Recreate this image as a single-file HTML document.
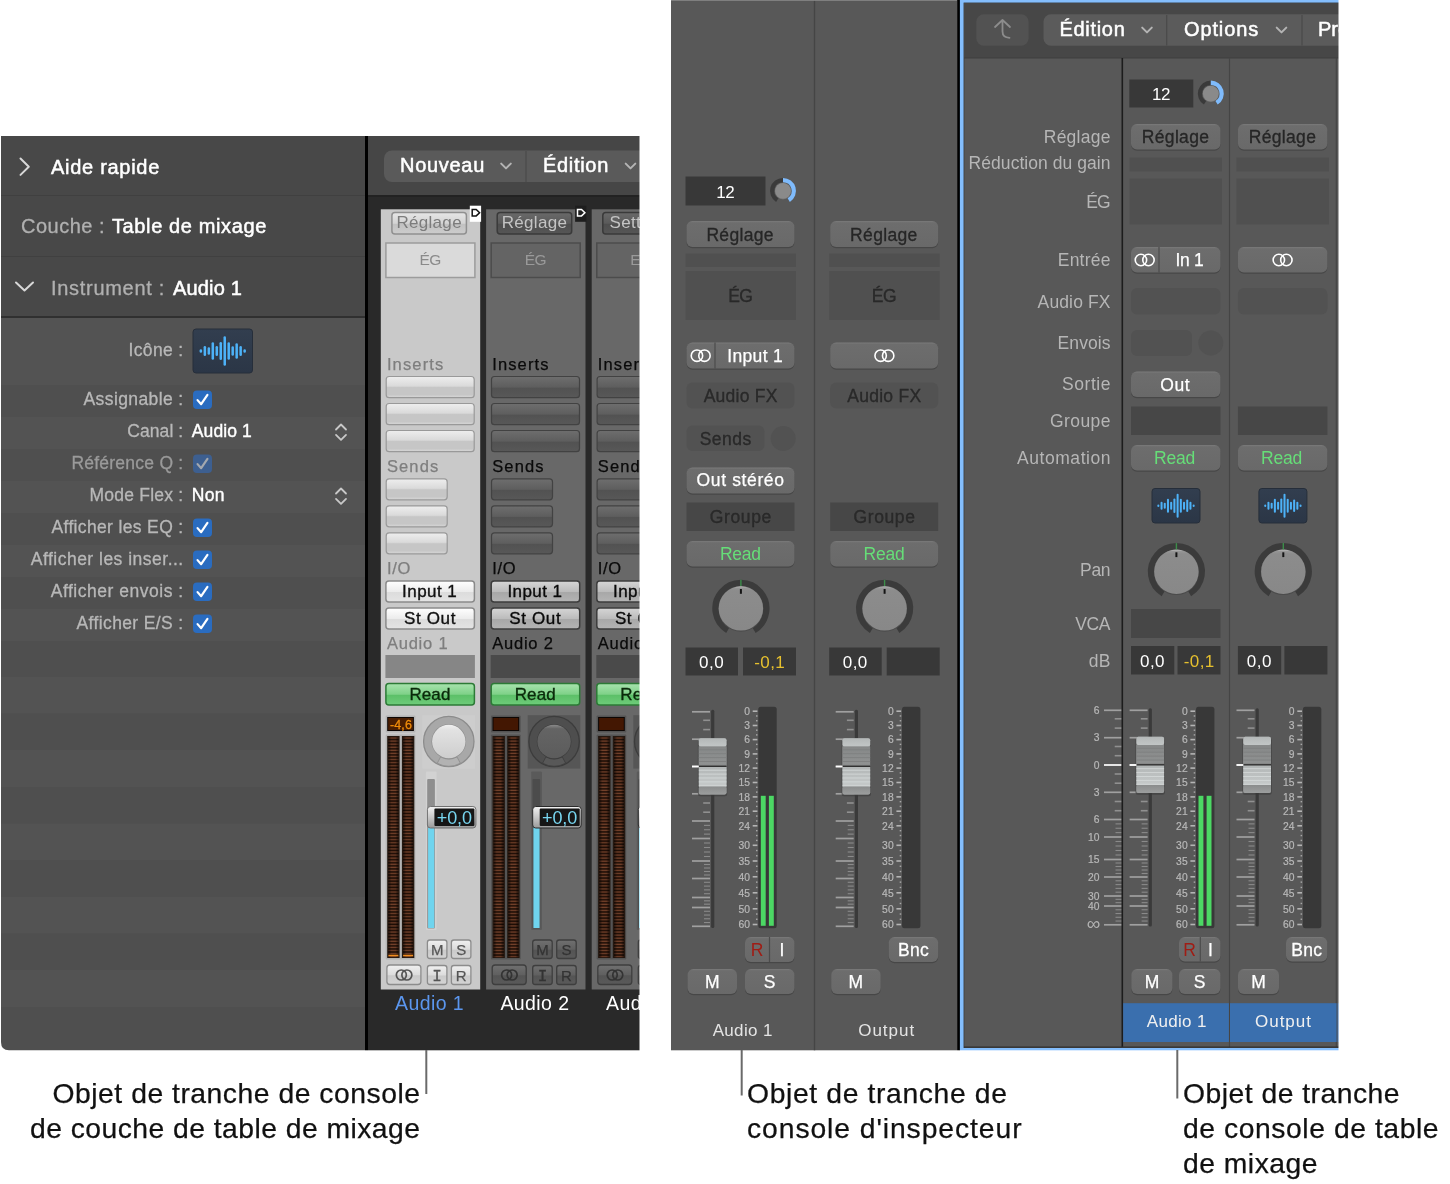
<!DOCTYPE html>
<html lang="fr"><head><meta charset="utf-8"><title>Objets de tranche de console</title>
<style>html,body{margin:0;padding:0;background:#ffffff;}body{width:1450px;height:1184px;overflow:hidden;}svg{display:block;will-change:transform;font-family:"Liberation Sans",sans-serif;}</style></head><body>
<svg width="1450" height="1184" viewBox="0 0 1450 1184">
<defs>
<clipPath id="envclip"><rect x="365" y="136" width="274.5" height="914"/></clipPath>
<clipPath id="mixclip"><rect x="957" y="0" width="381" height="1050"/></clipPath>
<linearGradient id="icong" x1="0" y1="0" x2="0" y2="1"><stop offset="0" stop-color="#323e4f"/><stop offset="1" stop-color="#2b3646"/></linearGradient>
<linearGradient id="slotL" x1="0" y1="0" x2="0" y2="1"><stop offset="0" stop-color="#eeeeee"/><stop offset="0.45" stop-color="#dadada"/><stop offset="0.52" stop-color="#c6c6c6"/><stop offset="0.85" stop-color="#c6c6c6"/><stop offset="1" stop-color="#d8d8d8"/></linearGradient>
<linearGradient id="slotD" x1="0" y1="0" x2="0" y2="1"><stop offset="0" stop-color="#6e6e6e"/><stop offset="0.5" stop-color="#5e5e5e"/><stop offset="0.55" stop-color="#525252"/><stop offset="1" stop-color="#585858"/></linearGradient>
<linearGradient id="btnL" x1="0" y1="0" x2="0" y2="1"><stop offset="0" stop-color="#ffffff"/><stop offset="0.5" stop-color="#ececec"/><stop offset="0.55" stop-color="#dcdcdc"/><stop offset="1" stop-color="#e4e4e4"/></linearGradient>
<linearGradient id="btnD" x1="0" y1="0" x2="0" y2="1"><stop offset="0" stop-color="#d6d6d6"/><stop offset="0.5" stop-color="#bcbcbc"/><stop offset="0.55" stop-color="#a8a8a8"/><stop offset="1" stop-color="#b4b4b4"/></linearGradient>
<linearGradient id="setL" x1="0" y1="0" x2="0" y2="1"><stop offset="0" stop-color="#e6e6e6"/><stop offset="0.5" stop-color="#d4d4d4"/><stop offset="0.55" stop-color="#c2c2c2"/><stop offset="1" stop-color="#cccccc"/></linearGradient>
<linearGradient id="setD" x1="0" y1="0" x2="0" y2="1"><stop offset="0" stop-color="#6a6a6a"/><stop offset="0.5" stop-color="#5a5a5a"/><stop offset="0.55" stop-color="#4e4e4e"/><stop offset="1" stop-color="#565656"/></linearGradient>
<linearGradient id="sqL" x1="0" y1="0" x2="0" y2="1"><stop offset="0" stop-color="#f0f0f0"/><stop offset="0.5" stop-color="#dcdcdc"/><stop offset="0.55" stop-color="#cacaca"/><stop offset="1" stop-color="#d4d4d4"/></linearGradient>
<linearGradient id="sqD" x1="0" y1="0" x2="0" y2="1"><stop offset="0" stop-color="#707070"/><stop offset="0.5" stop-color="#606060"/><stop offset="0.55" stop-color="#545454"/><stop offset="1" stop-color="#5a5a5a"/></linearGradient>
<linearGradient id="readG" x1="0" y1="0" x2="0" y2="1"><stop offset="0" stop-color="#a8e4ae"/><stop offset="0.5" stop-color="#7fd188"/><stop offset="0.55" stop-color="#5cc068"/><stop offset="1" stop-color="#6fcc7a"/></linearGradient>
<linearGradient id="capG" x1="0" y1="0" x2="0" y2="1"><stop offset="0" stop-color="#f2f2f2"/><stop offset="0.5" stop-color="#c8c8c8"/><stop offset="1" stop-color="#9a9a9a"/></linearGradient>
<linearGradient id="knobL" x1="0" y1="0" x2="0" y2="1"><stop offset="0" stop-color="#f0f0f0"/><stop offset="0.15" stop-color="#e2e2e2"/><stop offset="1" stop-color="#cecece"/></linearGradient>
<linearGradient id="knobD" x1="0" y1="0" x2="0" y2="1"><stop offset="0" stop-color="#8a8a8a"/><stop offset="0.12" stop-color="#646464"/><stop offset="1" stop-color="#5c5c5c"/></linearGradient>
<linearGradient id="btnG" x1="0" y1="0" x2="0" y2="1"><stop offset="0" stop-color="#7b7b7b"/><stop offset="0.07" stop-color="#6d6d6d"/><stop offset="1" stop-color="#696969"/></linearGradient>
<linearGradient id="panG" x1="0" y1="0" x2="0" y2="1"><stop offset="0" stop-color="#c4c4c4"/><stop offset="0.04" stop-color="#969696"/><stop offset="0.1" stop-color="#8c8c8c"/><stop offset="1" stop-color="#888888"/></linearGradient>
<linearGradient id="fcTop" x1="0" y1="0" x2="0" y2="1"><stop offset="0" stop-color="#b4b8b8"/><stop offset="1" stop-color="#c2c6c6"/></linearGradient>
<linearGradient id="fcMidT" x1="0" y1="0" x2="0" y2="1"><stop offset="0" stop-color="#868888"/><stop offset="1" stop-color="#909292"/></linearGradient>
<linearGradient id="fcMidB" x1="0" y1="0" x2="0" y2="1"><stop offset="0" stop-color="#b2b6b6"/><stop offset="1" stop-color="#c6caca"/></linearGradient>
<linearGradient id="fcBot" x1="0" y1="0" x2="0" y2="1"><stop offset="0" stop-color="#8a8c8c"/><stop offset="1" stop-color="#9c9e9e"/></linearGradient>
<linearGradient id="faderG" x1="0" y1="0" x2="0" y2="1"><stop offset="0" stop-color="#c4c4c4"/><stop offset="0.08" stop-color="#b4b4b4"/><stop offset="0.48" stop-color="#7c7c7c"/><stop offset="0.5" stop-color="#c8c8c8"/><stop offset="0.9" stop-color="#b0b0b0"/><stop offset="1" stop-color="#8c8c8c"/></linearGradient>
<pattern id="meterP" width="4" height="3.08" patternUnits="userSpaceOnUse" y="737"><rect width="4" height="3.08" fill="#1e0e06"/><rect y="0.35" width="4" height="1.35" fill="#74412a"/></pattern>
<linearGradient id="meterE" x1="0" y1="0" x2="1" y2="0"><stop offset="0" stop-color="#000" stop-opacity="0.55"/><stop offset="0.3" stop-color="#000" stop-opacity="0"/><stop offset="0.7" stop-color="#000" stop-opacity="0"/><stop offset="1" stop-color="#000" stop-opacity="0.55"/></linearGradient>
</defs>
<g id="inspector">
<path d="M1 136 H365 V1050.3 H9 Q1 1050.3 1 1042 Z" fill="#4f4f4f"/>
<rect x="1" y="136" width="364" height="181" fill="#484848"/>
<line x1="1" y1="195.5" x2="365" y2="195.5" stroke="#404040" stroke-width="1" />
<line x1="1" y1="256.5" x2="365" y2="256.5" stroke="#404040" stroke-width="1" />
<line x1="1" y1="317" x2="365" y2="317" stroke="#303030" stroke-width="2" />
<rect x="1" y="318" width="364" height="67" fill="#535353"/>
<rect x="1" y="385" width="364" height="32" fill="#4f4f4f"/>
<rect x="1" y="417" width="364" height="32" fill="#535353"/>
<rect x="1" y="449" width="364" height="32" fill="#4f4f4f"/>
<rect x="1" y="481" width="364" height="32" fill="#535353"/>
<rect x="1" y="513" width="364" height="32" fill="#4f4f4f"/>
<rect x="1" y="545" width="364" height="32" fill="#535353"/>
<rect x="1" y="577" width="364" height="32" fill="#4f4f4f"/>
<rect x="1" y="609" width="364" height="32" fill="#535353"/>
<rect x="1" y="677" width="364" height="36.5" fill="#535353"/>
<rect x="1" y="750" width="364" height="37" fill="#535353"/>
<rect x="1" y="823.5" width="364" height="36.5" fill="#535353"/>
<rect x="1" y="897" width="364" height="36.5" fill="#535353"/>
<rect x="1" y="970" width="364" height="37" fill="#535353"/>
<path d="M20.5 158.5 l8.3 8.2 l-8.3 8.2" fill="none" stroke="#d8d8d8" stroke-width="2" stroke-linecap="round" stroke-linejoin="round"/>
<text x="51" y="173.5" font-size="20" fill="#ffffff" letter-spacing="0.71" stroke="#ffffff" stroke-width="0.5">Aide rapide</text>
<text x="21" y="232.5" font-size="20" fill="#b0b0b0" letter-spacing="0.49" stroke="#b0b0b0" stroke-width="0.3">Couche :</text>
<text x="112" y="232.5" font-size="20" fill="#ffffff" letter-spacing="0.62" stroke="#ffffff" stroke-width="0.5">Table de mixage</text>
<path d="M16 282.5 l8.5 8 l8.5 -8" fill="none" stroke="#d8d8d8" stroke-width="2" stroke-linecap="round" stroke-linejoin="round"/>
<text x="51" y="294.5" font-size="20" fill="#b0b0b0" letter-spacing="0.7" stroke="#b0b0b0" stroke-width="0.3">Instrument :</text>
<text x="173" y="294.5" font-size="20" fill="#ffffff" letter-spacing="0.17" stroke="#ffffff" stroke-width="0.5">Audio 1</text>
<text x="183.55" y="356" font-size="17.5" fill="#b8b8b8" text-anchor="end" letter-spacing="0.35" stroke="#b8b8b8" stroke-width="0.3">Icône :</text>
<rect x="193" y="329" width="59.5" height="44" fill="url(#icong)" rx="3" stroke="#262e3a" stroke-width="1"/>
<rect x="199.61" y="349.35" width="2.5" height="3.3" fill="#4db2f8" rx="1.25"/>
<rect x="203.59" y="346" width="2.5" height="10" fill="#4db2f8" rx="1.25"/>
<rect x="207.57" y="347.15" width="2.5" height="7.7" fill="#4db2f8" rx="1.25"/>
<rect x="211.55" y="342.2" width="2.5" height="17.6" fill="#4db2f8" rx="1.25"/>
<rect x="215.53" y="346" width="2.5" height="10" fill="#4db2f8" rx="1.25"/>
<rect x="219.51" y="342.05" width="2.5" height="17.9" fill="#4db2f8" rx="1.25"/>
<rect x="223.49" y="336.2" width="2.5" height="29.6" fill="#4db2f8" rx="1.25"/>
<rect x="227.47" y="342.2" width="2.5" height="17.6" fill="#4db2f8" rx="1.25"/>
<rect x="231.45" y="346.15" width="2.5" height="9.7" fill="#4db2f8" rx="1.25"/>
<rect x="235.43" y="343.35" width="2.5" height="15.3" fill="#4db2f8" rx="1.25"/>
<rect x="239.41" y="346" width="2.5" height="10" fill="#4db2f8" rx="1.25"/>
<rect x="243.39" y="349.35" width="2.5" height="3.3" fill="#4db2f8" rx="1.25"/>
<text x="183.59" y="405" font-size="17.5" fill="#b8b8b8" text-anchor="end" letter-spacing="0.39" stroke="#b8b8b8" stroke-width="0.3">Assignable :</text>
<text x="183.28" y="437" font-size="17.5" fill="#b8b8b8" text-anchor="end" letter-spacing="0.08" stroke="#b8b8b8" stroke-width="0.3">Canal :</text>
<text x="183.44" y="469" font-size="17.5" fill="#9a9a9a" text-anchor="end" letter-spacing="0.24" stroke="#9a9a9a" stroke-width="0.3">Référence Q :</text>
<text x="183.43" y="501" font-size="17.5" fill="#b8b8b8" text-anchor="end" letter-spacing="0.23" stroke="#b8b8b8" stroke-width="0.3">Mode Flex :</text>
<text x="183.55" y="533" font-size="17.5" fill="#b8b8b8" text-anchor="end" letter-spacing="0.35" stroke="#b8b8b8" stroke-width="0.3">Afficher les EQ :</text>
<text x="183.69" y="565" font-size="17.5" fill="#b8b8b8" text-anchor="end" letter-spacing="0.49" stroke="#b8b8b8" stroke-width="0.3">Afficher les inser...</text>
<text x="183.72" y="597" font-size="17.5" fill="#b8b8b8" text-anchor="end" letter-spacing="0.52" stroke="#b8b8b8" stroke-width="0.3">Afficher envois :</text>
<text x="183.57" y="629" font-size="17.5" fill="#b8b8b8" text-anchor="end" letter-spacing="0.37" stroke="#b8b8b8" stroke-width="0.3">Afficher E/S :</text>
<rect x="193" y="390.5" width="19" height="18.5" fill="#2a6cc0" rx="4"/>
<path d="M197.56 400.12 L201.17 404.19 L207.44 394.94" fill="none" stroke="#ffffff" stroke-width="2.2" stroke-linecap="round" stroke-linejoin="round"/>
<rect x="193" y="454.5" width="19" height="18.5" fill="#3d5f90" rx="4"/>
<path d="M197.56 464.12 L201.17 468.19 L207.44 458.94" fill="none" stroke="#a4a8ae" stroke-width="2.2" stroke-linecap="round" stroke-linejoin="round"/>
<rect x="193" y="518.5" width="19" height="18.5" fill="#2a6cc0" rx="4"/>
<path d="M197.56 528.12 L201.17 532.19 L207.44 522.94" fill="none" stroke="#ffffff" stroke-width="2.2" stroke-linecap="round" stroke-linejoin="round"/>
<rect x="193" y="550.5" width="19" height="18.5" fill="#2a6cc0" rx="4"/>
<path d="M197.56 560.12 L201.17 564.19 L207.44 554.94" fill="none" stroke="#ffffff" stroke-width="2.2" stroke-linecap="round" stroke-linejoin="round"/>
<rect x="193" y="582.5" width="19" height="18.5" fill="#2a6cc0" rx="4"/>
<path d="M197.56 592.12 L201.17 596.19 L207.44 586.94" fill="none" stroke="#ffffff" stroke-width="2.2" stroke-linecap="round" stroke-linejoin="round"/>
<rect x="193" y="614.5" width="19" height="18.5" fill="#2a6cc0" rx="4"/>
<path d="M197.56 624.12 L201.17 628.19 L207.44 618.94" fill="none" stroke="#ffffff" stroke-width="2.2" stroke-linecap="round" stroke-linejoin="round"/>
<text x="191.8" y="437.2" font-size="17.5" fill="#ffffff" letter-spacing="0.09" stroke="#ffffff" stroke-width="0.4">Audio 1</text>
<text x="191.8" y="501.2" font-size="17.5" fill="#ffffff" letter-spacing="0.3" stroke="#ffffff" stroke-width="0.4">Non</text>
<path d="M336 429.5 l5 -5 l5 5" fill="none" stroke="#c8c8c8" stroke-width="1.8" stroke-linecap="round" stroke-linejoin="round"/>
<path d="M336 434.9 l5 5 l5 -5" fill="none" stroke="#c8c8c8" stroke-width="1.8" stroke-linecap="round" stroke-linejoin="round"/>
<path d="M336 493.5 l5 -5 l5 5" fill="none" stroke="#c8c8c8" stroke-width="1.8" stroke-linecap="round" stroke-linejoin="round"/>
<path d="M336 498.9 l5 5 l5 -5" fill="none" stroke="#c8c8c8" stroke-width="1.8" stroke-linecap="round" stroke-linejoin="round"/>
</g>
<g id="environment">
<rect x="365" y="136" width="3" height="914.3" fill="#000000"/>
<rect x="368" y="136" width="277" height="60" fill="#464646"/>
<rect x="368" y="195" width="277" height="855.3" fill="#292929"/>
<rect x="368" y="195" width="277" height="2" fill="#222222"/>
<rect x="384" y="150.5" width="276" height="31.5" fill="#5a5a5a" rx="8"/>
<line x1="526" y1="151" x2="526" y2="182" stroke="#4a4a4a" stroke-width="1.2" />
<text x="400" y="172" font-size="20" fill="#ffffff" letter-spacing="0.71" stroke="#ffffff" stroke-width="0.5">Nouveau</text>
<path d="M501.2 163.6 l4.8 4.8 l4.8 -4.8" fill="none" stroke="#b4b4b4" stroke-width="2" stroke-linecap="round" stroke-linejoin="round"/>
<text x="543" y="172" font-size="20" fill="#ffffff" letter-spacing="0.69" stroke="#ffffff" stroke-width="0.5">Édition</text>
<path d="M625.7 163.6 l4.8 4.8 l4.8 -4.8" fill="none" stroke="#b4b4b4" stroke-width="2" stroke-linecap="round" stroke-linejoin="round"/>
<rect x="380.8" y="209.3" width="99.4" height="780.2" fill="#c9c9c9"/>
<rect x="391.9" y="212.5" width="74.5" height="21.5" fill="url(#setL)" rx="3" stroke="#909090" stroke-width="1.5"/>
<text x="429.16" y="228.2" font-size="17" fill="#7c7c7c" text-anchor="middle" letter-spacing="0.31">Réglage</text>
<rect x="385.9" y="243" width="89" height="34.5" fill="#dadada" stroke="#9c9c9c" stroke-width="1.5"/>
<text x="430.05" y="264.7" font-size="15.5" fill="#8a8a8a" text-anchor="middle" letter-spacing="-0.7">ÉG</text>
<text x="386.9" y="369.7" font-size="16.5" fill="#7e7e7e" letter-spacing="1.14" stroke="#7e7e7e" stroke-width="0.25">Inserts</text>
<rect x="386.2" y="376.5" width="88" height="21.2" fill="url(#slotL)" rx="3" stroke="#999999" stroke-width="1.2"/>
<rect x="386.2" y="403.5" width="88" height="21.2" fill="url(#slotL)" rx="3" stroke="#999999" stroke-width="1.2"/>
<rect x="386.2" y="430.5" width="88" height="21.2" fill="url(#slotL)" rx="3" stroke="#999999" stroke-width="1.2"/>
<text x="386.9" y="471.7" font-size="16.5" fill="#7e7e7e" letter-spacing="1.14" stroke="#7e7e7e" stroke-width="0.25">Sends</text>
<rect x="386.2" y="478.9" width="61" height="20.9" fill="url(#slotL)" rx="3" stroke="#999999" stroke-width="1.2"/>
<rect x="386.2" y="505.9" width="61" height="20.9" fill="url(#slotL)" rx="3" stroke="#999999" stroke-width="1.2"/>
<rect x="386.2" y="532.9" width="61" height="20.9" fill="url(#slotL)" rx="3" stroke="#999999" stroke-width="1.2"/>
<text x="386.9" y="574" font-size="16.5" fill="#7e7e7e" letter-spacing="0.67" stroke="#7e7e7e" stroke-width="0.25">I/O</text>
<rect x="385.9" y="581" width="88.5" height="21" fill="url(#btnL)" rx="3" stroke="#8a8a8a" stroke-width="1.5"/>
<text x="429.62" y="596.7" font-size="17" fill="#111111" text-anchor="middle" letter-spacing="0.43" stroke="#111111" stroke-width="0.35">Input 1</text>
<rect x="385.9" y="608" width="88.5" height="21" fill="url(#btnL)" rx="3" stroke="#8a8a8a" stroke-width="1.5"/>
<text x="430.02" y="623.7" font-size="17" fill="#111111" text-anchor="middle" letter-spacing="0.64" stroke="#111111" stroke-width="0.35">St Out</text>
<text x="386.9" y="649.2" font-size="16.5" fill="#7e7e7e" letter-spacing="0.79" stroke="#7e7e7e" stroke-width="0.25">Audio 1</text>
<rect x="385.4" y="655" width="89.5" height="23" fill="#868686"/>
<rect x="385.9" y="683.5" width="88.5" height="21.5" fill="url(#readG)" rx="3" stroke="#2c7a36" stroke-width="1.5"/>
<text x="429.95" y="699.7" font-size="17" fill="#0a2a0a" text-anchor="middle" letter-spacing="0.09" stroke="#0a2a0a" stroke-width="0.35">Read</text>
<rect x="385.7" y="715.5" width="29.7" height="17" fill="#b4b4b4" rx="1"/>
<rect x="387.2" y="717" width="26.7" height="14" fill="#0c0604"/>
<rect x="388.2" y="718" width="24.7" height="12" fill="#4a1e02"/>
<text x="400.96" y="728.6" font-size="12.5" fill="#f08c0a" text-anchor="middle" letter-spacing="0.12" stroke="#f08c0a" stroke-width="0.3">-4,6</text>
<rect x="385.7" y="734.5" width="29.7" height="225" fill="#b4b4b4" rx="1"/>
<rect x="387.2" y="736" width="12.4" height="222" fill="#241810"/>
<rect x="388.4" y="737" width="10" height="220.5" fill="url(#meterP)"/>
<rect x="388.4" y="737" width="10" height="220.5" fill="url(#meterE)"/>
<rect x="388.4" y="954.7" width="10" height="1.6" fill="#f08c1e"/>
<rect x="401.9" y="736" width="12.4" height="222" fill="#241810"/>
<rect x="403.1" y="737" width="10" height="220.5" fill="url(#meterP)"/>
<rect x="403.1" y="737" width="10" height="220.5" fill="url(#meterE)"/>
<rect x="403.1" y="954.7" width="10" height="1.6" fill="#f08c1e"/>
<rect x="422.4" y="715.2" width="52.6" height="53.4" fill="#cdcdcd"/>
<circle cx="448.8" cy="741.5" r="25.2" fill="#a8a8a8" stroke="#8c8c8c" stroke-width="1.3"/>
<path d="M457.02 756.95 L460.35 763.22 A24.6 24.6 0 0 1 437.25 763.22 L440.58 756.95 A17.5 17.5 0 0 0 457.02 756.95 Z" fill="#b2b2b2" stroke="#8c8c8c" stroke-width="0.8"/>
<circle cx="448.8" cy="741.5" r="17.3" fill="#8c8c8c"/>
<circle cx="448.8" cy="741.5" r="16.7" fill="url(#knobL)"/>
<rect x="425.9" y="771.5" width="10.7" height="158.5" fill="#d2d2d2" rx="1"/>
<rect x="427.2" y="779" width="7.7" height="149.5" fill="#8e8e8e" rx="1"/>
<rect x="428.1" y="827" width="6.2" height="101" fill="#6fd4ee" rx="0.5"/>
<rect x="427.4" y="806.5" width="48.5" height="21.5" fill="url(#capG)" rx="3" stroke="#707070" stroke-width="1"/>
<rect x="434.4" y="808.5" width="40" height="17.5" fill="#161616" rx="1"/>
<text x="454.33" y="824" font-size="18" fill="#78d6f0" text-anchor="middle" letter-spacing="-0.13">+0,0</text>
<rect x="427.4" y="940" width="19.5" height="18.5" fill="url(#sqL)" rx="2.5" stroke="#8c8c8c" stroke-width="1.3"/>
<text x="437.15" y="954.9" font-size="15" fill="#555555" text-anchor="middle" stroke="#555555" stroke-width="0.25">M</text>
<rect x="451.4" y="940" width="19.5" height="18.5" fill="url(#sqL)" rx="2.5" stroke="#8c8c8c" stroke-width="1.3"/>
<text x="461.15" y="954.9" font-size="15" fill="#555555" text-anchor="middle" stroke="#555555" stroke-width="0.25">S</text>
<rect x="386.9" y="965" width="34" height="19.5" fill="url(#sqL)" rx="3" stroke="#8c8c8c" stroke-width="1.3"/>
<circle cx="401.35" cy="975" r="5" fill="none" stroke="#555555" stroke-width="1.7"/>
<circle cx="406.85" cy="975" r="5" fill="none" stroke="#555555" stroke-width="1.7"/>
<rect x="427.4" y="965.5" width="19.5" height="19" fill="url(#sqL)" rx="2.5" stroke="#8c8c8c" stroke-width="1.3"/>
<text x="437.15" y="980.9" font-size="16" fill="#555555" text-anchor="middle" font-family="Liberation Mono,monospace" stroke="#555555" stroke-width="0.3">I</text>
<rect x="451.4" y="965.5" width="19.5" height="19" fill="url(#sqL)" rx="2.5" stroke="#8c8c8c" stroke-width="1.3"/>
<text x="461.15" y="980.9" font-size="15" fill="#555555" text-anchor="middle" stroke="#555555" stroke-width="0.25">R</text>
<rect x="469.8" y="205.7" width="11.3" height="16.1" fill="#ffffff"/>
<path d="M472.2 209.5 h4 l3.4 3.2 l-3.4 3.2 h-4 z" fill="none" stroke="#111111" stroke-width="1.5"/>
<text x="429.6" y="1010" font-size="19.5" fill="#5b96ee" text-anchor="middle" letter-spacing="0.41">Audio 1</text>
<rect x="486.1" y="209.3" width="99.4" height="780.2" fill="#686868"/>
<rect x="497.2" y="212.5" width="74.5" height="21.5" fill="url(#setD)" rx="3" stroke="#3a3a3a" stroke-width="1.5"/>
<text x="534.46" y="228.2" font-size="17" fill="#c4c4c4" text-anchor="middle" letter-spacing="0.31">Réglage</text>
<rect x="491.2" y="243" width="89" height="34.5" fill="#646464" stroke="#4c4c4c" stroke-width="1.5"/>
<text x="535.35" y="264.7" font-size="15.5" fill="#9a9a9a" text-anchor="middle" letter-spacing="-0.7">ÉG</text>
<text x="492.2" y="369.7" font-size="16.5" fill="#0a0a0a" letter-spacing="1.14" stroke="#0a0a0a" stroke-width="0.25">Inserts</text>
<rect x="491.5" y="376.5" width="88" height="21.2" fill="url(#slotD)" rx="3" stroke="#424242" stroke-width="1.2"/>
<rect x="491.5" y="403.5" width="88" height="21.2" fill="url(#slotD)" rx="3" stroke="#424242" stroke-width="1.2"/>
<rect x="491.5" y="430.5" width="88" height="21.2" fill="url(#slotD)" rx="3" stroke="#424242" stroke-width="1.2"/>
<text x="492.2" y="471.7" font-size="16.5" fill="#0a0a0a" letter-spacing="1.14" stroke="#0a0a0a" stroke-width="0.25">Sends</text>
<rect x="491.5" y="478.9" width="61" height="20.9" fill="url(#slotD)" rx="3" stroke="#424242" stroke-width="1.2"/>
<rect x="491.5" y="505.9" width="61" height="20.9" fill="url(#slotD)" rx="3" stroke="#424242" stroke-width="1.2"/>
<rect x="491.5" y="532.9" width="61" height="20.9" fill="url(#slotD)" rx="3" stroke="#424242" stroke-width="1.2"/>
<text x="492.2" y="574" font-size="16.5" fill="#0a0a0a" letter-spacing="0.67" stroke="#0a0a0a" stroke-width="0.25">I/O</text>
<rect x="491.2" y="581" width="88.5" height="21" fill="url(#btnD)" rx="3" stroke="#3c3c3c" stroke-width="1.5"/>
<text x="534.92" y="596.7" font-size="17" fill="#0a0a0a" text-anchor="middle" letter-spacing="0.43" stroke="#0a0a0a" stroke-width="0.35">Input 1</text>
<rect x="491.2" y="608" width="88.5" height="21" fill="url(#btnD)" rx="3" stroke="#3c3c3c" stroke-width="1.5"/>
<text x="535.32" y="623.7" font-size="17" fill="#0a0a0a" text-anchor="middle" letter-spacing="0.64" stroke="#0a0a0a" stroke-width="0.35">St Out</text>
<text x="492.2" y="649.2" font-size="16.5" fill="#0a0a0a" letter-spacing="0.79" stroke="#0a0a0a" stroke-width="0.25">Audio 2</text>
<rect x="490.7" y="655" width="89.5" height="23" fill="#4a4a4a"/>
<rect x="491.2" y="683.5" width="88.5" height="21.5" fill="url(#readG)" rx="3" stroke="#2c7a36" stroke-width="1.5"/>
<text x="535.25" y="699.7" font-size="17" fill="#0a2a0a" text-anchor="middle" letter-spacing="0.09" stroke="#0a2a0a" stroke-width="0.35">Read</text>
<rect x="491" y="715.5" width="29.7" height="17" fill="#545454" rx="1"/>
<rect x="492.5" y="717" width="26.7" height="14" fill="#0c0604"/>
<rect x="493.5" y="718" width="24.7" height="12" fill="#431702"/>
<rect x="491" y="734.5" width="29.7" height="225" fill="#545454" rx="1"/>
<rect x="492.5" y="736" width="12.4" height="222" fill="#241810"/>
<rect x="493.7" y="737" width="10" height="220.5" fill="url(#meterP)"/>
<rect x="493.7" y="737" width="10" height="220.5" fill="url(#meterE)"/>
<rect x="507.2" y="736" width="12.4" height="222" fill="#241810"/>
<rect x="508.4" y="737" width="10" height="220.5" fill="url(#meterP)"/>
<rect x="508.4" y="737" width="10" height="220.5" fill="url(#meterE)"/>
<rect x="527.7" y="715.2" width="52.6" height="53.4" fill="#565656"/>
<circle cx="554.1" cy="741.5" r="25.2" fill="#4e4e4e" stroke="#3c3c3c" stroke-width="1.3"/>
<path d="M562.32 756.95 L565.65 763.22 A24.6 24.6 0 0 1 542.55 763.22 L545.88 756.95 A17.5 17.5 0 0 0 562.32 756.95 Z" fill="#585858" stroke="#3c3c3c" stroke-width="0.8"/>
<circle cx="554.1" cy="741.5" r="17.3" fill="#3c3c3c"/>
<circle cx="554.1" cy="741.5" r="16.7" fill="url(#knobD)"/>
<rect x="531.2" y="771.5" width="10.7" height="158.5" fill="#5a5a5a" rx="1"/>
<rect x="532.5" y="779" width="7.7" height="149.5" fill="#4c4c4c" rx="1"/>
<rect x="533.4" y="827" width="6.2" height="101" fill="#6fd4ee" rx="0.5"/>
<rect x="532.7" y="806.5" width="48.5" height="21.5" fill="url(#capG)" rx="3" stroke="#2a2a2a" stroke-width="1"/>
<rect x="539.7" y="808.5" width="40" height="17.5" fill="#161616" rx="1"/>
<text x="559.63" y="824" font-size="18" fill="#78d6f0" text-anchor="middle" letter-spacing="-0.13">+0,0</text>
<rect x="532.7" y="940" width="19.5" height="18.5" fill="url(#sqD)" rx="2.5" stroke="#3e3e3e" stroke-width="1.3"/>
<text x="542.45" y="954.9" font-size="15" fill="#333333" text-anchor="middle" stroke="#333333" stroke-width="0.25">M</text>
<rect x="556.7" y="940" width="19.5" height="18.5" fill="url(#sqD)" rx="2.5" stroke="#3e3e3e" stroke-width="1.3"/>
<text x="566.45" y="954.9" font-size="15" fill="#333333" text-anchor="middle" stroke="#333333" stroke-width="0.25">S</text>
<rect x="492.2" y="965" width="34" height="19.5" fill="url(#sqD)" rx="3" stroke="#3e3e3e" stroke-width="1.3"/>
<circle cx="506.65" cy="975" r="5" fill="none" stroke="#333333" stroke-width="1.7"/>
<circle cx="512.15" cy="975" r="5" fill="none" stroke="#333333" stroke-width="1.7"/>
<rect x="532.7" y="965.5" width="19.5" height="19" fill="url(#sqD)" rx="2.5" stroke="#3e3e3e" stroke-width="1.3"/>
<text x="542.45" y="980.9" font-size="16" fill="#333333" text-anchor="middle" font-family="Liberation Mono,monospace" stroke="#333333" stroke-width="0.3">I</text>
<rect x="556.7" y="965.5" width="19.5" height="19" fill="url(#sqD)" rx="2.5" stroke="#3e3e3e" stroke-width="1.3"/>
<text x="566.45" y="980.9" font-size="15" fill="#333333" text-anchor="middle" stroke="#333333" stroke-width="0.25">R</text>
<rect x="575.1" y="205.7" width="11.3" height="16.1" fill="#1e1e1e"/>
<path d="M577.5 209.5 h4 l3.4 3.2 l-3.4 3.2 h-4 z" fill="none" stroke="#ffffff" stroke-width="1.5"/>
<text x="534.9" y="1010" font-size="19.5" fill="#ffffff" text-anchor="middle" letter-spacing="0.41">Audio 2</text>
<rect x="591.7" y="209.3" width="99.4" height="780.2" fill="#686868"/>
<rect x="602.8" y="212.5" width="74.5" height="21.5" fill="url(#setD)" rx="3" stroke="#3a3a3a" stroke-width="1.5"/>
<text x="609.6" y="228.2" font-size="17" fill="#c4c4c4" letter-spacing="0.3">Setting</text>
<rect x="596.8" y="243" width="89" height="34.5" fill="#646464" stroke="#4c4c4c" stroke-width="1.5"/>
<text x="641.2" y="264.7" font-size="15.5" fill="#9a9a9a" text-anchor="middle" letter-spacing="-0.2">EQ</text>
<text x="597.8" y="369.7" font-size="16.5" fill="#0a0a0a" letter-spacing="1.14" stroke="#0a0a0a" stroke-width="0.25">Inserts</text>
<rect x="597.1" y="376.5" width="88" height="21.2" fill="url(#slotD)" rx="3" stroke="#424242" stroke-width="1.2"/>
<rect x="597.1" y="403.5" width="88" height="21.2" fill="url(#slotD)" rx="3" stroke="#424242" stroke-width="1.2"/>
<rect x="597.1" y="430.5" width="88" height="21.2" fill="url(#slotD)" rx="3" stroke="#424242" stroke-width="1.2"/>
<text x="597.8" y="471.7" font-size="16.5" fill="#0a0a0a" letter-spacing="1.14" stroke="#0a0a0a" stroke-width="0.25">Sends</text>
<rect x="597.1" y="478.9" width="61" height="20.9" fill="url(#slotD)" rx="3" stroke="#424242" stroke-width="1.2"/>
<rect x="597.1" y="505.9" width="61" height="20.9" fill="url(#slotD)" rx="3" stroke="#424242" stroke-width="1.2"/>
<rect x="597.1" y="532.9" width="61" height="20.9" fill="url(#slotD)" rx="3" stroke="#424242" stroke-width="1.2"/>
<text x="597.8" y="574" font-size="16.5" fill="#0a0a0a" letter-spacing="0.67" stroke="#0a0a0a" stroke-width="0.25">I/O</text>
<rect x="596.8" y="581" width="88.5" height="21" fill="url(#btnD)" rx="3" stroke="#3c3c3c" stroke-width="1.5"/>
<text x="640.52" y="596.7" font-size="17" fill="#0a0a0a" text-anchor="middle" letter-spacing="0.43" stroke="#0a0a0a" stroke-width="0.35">Input 1</text>
<rect x="596.8" y="608" width="88.5" height="21" fill="url(#btnD)" rx="3" stroke="#3c3c3c" stroke-width="1.5"/>
<text x="640.92" y="623.7" font-size="17" fill="#0a0a0a" text-anchor="middle" letter-spacing="0.64" stroke="#0a0a0a" stroke-width="0.35">St Out</text>
<text x="597.8" y="649.2" font-size="16.5" fill="#0a0a0a" letter-spacing="0.79" stroke="#0a0a0a" stroke-width="0.25">Audio 3</text>
<rect x="596.3" y="655" width="89.5" height="23" fill="#4a4a4a"/>
<rect x="596.8" y="683.5" width="88.5" height="21.5" fill="url(#readG)" rx="3" stroke="#2c7a36" stroke-width="1.5"/>
<text x="640.85" y="699.7" font-size="17" fill="#0a2a0a" text-anchor="middle" letter-spacing="0.09" stroke="#0a2a0a" stroke-width="0.35">Read</text>
<rect x="596.6" y="715.5" width="29.7" height="17" fill="#545454" rx="1"/>
<rect x="598.1" y="717" width="26.7" height="14" fill="#0c0604"/>
<rect x="599.1" y="718" width="24.7" height="12" fill="#431702"/>
<rect x="596.6" y="734.5" width="29.7" height="225" fill="#545454" rx="1"/>
<rect x="598.1" y="736" width="12.4" height="222" fill="#241810"/>
<rect x="599.3" y="737" width="10" height="220.5" fill="url(#meterP)"/>
<rect x="599.3" y="737" width="10" height="220.5" fill="url(#meterE)"/>
<rect x="612.8" y="736" width="12.4" height="222" fill="#241810"/>
<rect x="614" y="737" width="10" height="220.5" fill="url(#meterP)"/>
<rect x="614" y="737" width="10" height="220.5" fill="url(#meterE)"/>
<rect x="633.3" y="715.2" width="52.6" height="53.4" fill="#565656"/>
<circle cx="659.7" cy="741.5" r="25.2" fill="#4e4e4e" stroke="#3c3c3c" stroke-width="1.3"/>
<path d="M667.92 756.95 L671.25 763.22 A24.6 24.6 0 0 1 648.15 763.22 L651.48 756.95 A17.5 17.5 0 0 0 667.92 756.95 Z" fill="#585858" stroke="#3c3c3c" stroke-width="0.8"/>
<circle cx="659.7" cy="741.5" r="17.3" fill="#3c3c3c"/>
<circle cx="659.7" cy="741.5" r="16.7" fill="url(#knobD)"/>
<rect x="636.8" y="771.5" width="10.7" height="158.5" fill="#5a5a5a" rx="1"/>
<rect x="638.1" y="779" width="7.7" height="149.5" fill="#4c4c4c" rx="1"/>
<rect x="639" y="827" width="6.2" height="101" fill="#6fd4ee" rx="0.5"/>
<rect x="638.3" y="806.5" width="48.5" height="21.5" fill="url(#capG)" rx="3" stroke="#2a2a2a" stroke-width="1"/>
<rect x="645.3" y="808.5" width="40" height="17.5" fill="#161616" rx="1"/>
<text x="665.23" y="824" font-size="18" fill="#78d6f0" text-anchor="middle" letter-spacing="-0.13">+0,0</text>
<rect x="638.3" y="940" width="19.5" height="18.5" fill="url(#sqD)" rx="2.5" stroke="#3e3e3e" stroke-width="1.3"/>
<text x="648.05" y="954.9" font-size="15" fill="#333333" text-anchor="middle" stroke="#333333" stroke-width="0.25">M</text>
<rect x="662.3" y="940" width="19.5" height="18.5" fill="url(#sqD)" rx="2.5" stroke="#3e3e3e" stroke-width="1.3"/>
<text x="672.05" y="954.9" font-size="15" fill="#333333" text-anchor="middle" stroke="#333333" stroke-width="0.25">S</text>
<rect x="597.8" y="965" width="34" height="19.5" fill="url(#sqD)" rx="3" stroke="#3e3e3e" stroke-width="1.3"/>
<circle cx="612.25" cy="975" r="5" fill="none" stroke="#333333" stroke-width="1.7"/>
<circle cx="617.75" cy="975" r="5" fill="none" stroke="#333333" stroke-width="1.7"/>
<rect x="638.3" y="965.5" width="19.5" height="19" fill="url(#sqD)" rx="2.5" stroke="#3e3e3e" stroke-width="1.3"/>
<text x="648.05" y="980.9" font-size="16" fill="#333333" text-anchor="middle" font-family="Liberation Mono,monospace" stroke="#333333" stroke-width="0.3">I</text>
<rect x="662.3" y="965.5" width="19.5" height="19" fill="url(#sqD)" rx="2.5" stroke="#3e3e3e" stroke-width="1.3"/>
<text x="672.05" y="980.9" font-size="15" fill="#333333" text-anchor="middle" stroke="#333333" stroke-width="0.25">R</text>
<rect x="680.7" y="205.7" width="11.3" height="16.1" fill="#1e1e1e"/>
<path d="M683.1 209.5 h4 l3.4 3.2 l-3.4 3.2 h-4 z" fill="none" stroke="#ffffff" stroke-width="1.5"/>
<text x="640.5" y="1010" font-size="19.5" fill="#ffffff" text-anchor="middle" letter-spacing="0.41">Audio 3</text>
<rect x="639.5" y="130" width="31.5" height="926" fill="#ffffff"/>
</g>
<g id="inspector-strips">
<rect x="671" y="0" width="286" height="1050.3" fill="#585858"/>
<line x1="814.5" y1="0" x2="814.5" y2="1050.3" stroke="#454545" stroke-width="1.4" />
<rect x="671" y="0" width="286" height="0.8" fill="#8a8a8a"/>
<rect x="685.5" y="176.5" width="80" height="29" fill="#383838"/>
<text x="725.27" y="197.5" font-size="17" fill="#ffffff" text-anchor="middle" letter-spacing="-0.45">12</text>
<path d="M777.25 200.1 A10.85 10.85 0 0 1 783 180.05" fill="none" stroke="#3a3a3a" stroke-width="4.3"/>
<path d="M783 180.05 A10.85 10.85 0 0 1 788.75 200.1" fill="none" stroke="#7fbbfc" stroke-width="4.3"/>
<circle cx="783" cy="191.3" r="8.1" fill="#6e6e6e"/>
<circle cx="783" cy="190.9" r="7.9" fill="#8a8a8a"/>
<rect x="686.5" y="222" width="108" height="26.2" fill="#474747" rx="6"/>
<rect x="686.5" y="221" width="108" height="26" fill="url(#btnG)" rx="6"/>
<text x="740.17" y="240.5" font-size="17.5" fill="#262626" text-anchor="middle" letter-spacing="0.33" stroke="#262626" stroke-width="0.3">Réglage</text>
<rect x="685.5" y="253.5" width="110.5" height="13.5" fill="#505050"/>
<rect x="685.5" y="271" width="110.5" height="49" fill="#505050"/>
<text x="740.18" y="302" font-size="17.5" fill="#2a2a2a" text-anchor="middle" letter-spacing="-0.64" stroke="#262626" stroke-width="0.3">ÉG</text>
<rect x="686.5" y="343.5" width="108" height="26.2" fill="#474747" rx="6"/>
<rect x="686.5" y="342.5" width="108" height="26" fill="url(#btnG)" rx="6"/>
<line x1="715" y1="342.5" x2="715" y2="368.5" stroke="#4c4c4c" stroke-width="1.2" />
<circle cx="696.94" cy="355.7" r="5.7" fill="none" stroke="#ffffff" stroke-width="1.6"/>
<circle cx="704.46" cy="355.7" r="5.7" fill="none" stroke="#ffffff" stroke-width="1.6"/>
<text x="755.18" y="362" font-size="17.5" fill="#ffffff" text-anchor="middle" letter-spacing="0.36" stroke="#ffffff" stroke-width="0.25">Input 1</text>
<rect x="686.5" y="382.5" width="108" height="26" fill="#525252" rx="6"/>
<text x="740.63" y="402" font-size="17.5" fill="#2a2a2a" text-anchor="middle" letter-spacing="0.25" stroke="#262626" stroke-width="0.3">Audio FX</text>
<rect x="686.5" y="425.5" width="78" height="25.5" fill="#525252" rx="6"/>
<text x="725.74" y="444.5" font-size="17.5" fill="#2a2a2a" text-anchor="middle" letter-spacing="0.48" stroke="#262626" stroke-width="0.3">Sends</text>
<circle cx="783.2" cy="438.5" r="12.5" fill="#525252"/>
<rect x="686.5" y="468.5" width="108" height="26.2" fill="#474747" rx="6"/>
<rect x="686.5" y="467.5" width="108" height="26" fill="url(#btnG)" rx="6"/>
<text x="740.61" y="486.3" font-size="17.5" fill="#ffffff" text-anchor="middle" letter-spacing="0.63" stroke="#ffffff" stroke-width="0.25">Out stéréo</text>
<rect x="686.5" y="502.5" width="108" height="28.5" fill="#474747"/>
<text x="740.8" y="523" font-size="17.5" fill="#2a2a2a" text-anchor="middle" letter-spacing="0.61" stroke="#262626" stroke-width="0.3">Groupe</text>
<rect x="686.5" y="542" width="108" height="25.7" fill="#474747" rx="6"/>
<rect x="686.5" y="541" width="108" height="25.5" fill="url(#btnG)" rx="6"/>
<text x="740.4" y="560" font-size="17.5" fill="#66de78" text-anchor="middle" letter-spacing="-0.21">Read</text>
<path d="M727.79 630.21 A25.45 25.45 0 1 1 754.01 630.21" fill="none" stroke="#3b3b3b" stroke-width="6.3"/>
<circle cx="740.9" cy="609.6" r="22.2" fill="#4c4c4c"/>
<circle cx="740.9" cy="608.4" r="22.2" fill="url(#panG)"/>
<line x1="740.9" y1="579.8" x2="740.9" y2="586.1" stroke="#3c8e4a" stroke-width="1.4" />
<line x1="740.9" y1="589" x2="740.9" y2="593.8" stroke="#141414" stroke-width="2" />
<rect x="685.5" y="647.5" width="52.5" height="28" fill="#383838"/>
<rect x="743" y="647.5" width="53" height="28" fill="#383838"/>
<text x="711.58" y="668.3" font-size="17" fill="#ffffff" text-anchor="middle" letter-spacing="0.46">0,0</text>
<text x="769.71" y="668.3" font-size="17" fill="#e6c02e" text-anchor="middle" letter-spacing="0.43">-0,1</text>
<line x1="692" y1="711.8" x2="710" y2="711.8" stroke="#a0a0a0" stroke-width="1.7" />
<line x1="692" y1="739.2" x2="710" y2="739.2" stroke="#a0a0a0" stroke-width="1.7" />
<line x1="692" y1="766.5" x2="710" y2="766.5" stroke="#a0a0a0" stroke-width="1.7" />
<line x1="692" y1="793.8" x2="710" y2="793.8" stroke="#a0a0a0" stroke-width="1.7" />
<line x1="692" y1="821" x2="710" y2="821" stroke="#a0a0a0" stroke-width="1.7" />
<line x1="692" y1="838.5" x2="710" y2="838.5" stroke="#a0a0a0" stroke-width="1.7" />
<line x1="692" y1="861" x2="710" y2="861" stroke="#a0a0a0" stroke-width="1.7" />
<line x1="692" y1="878.5" x2="710" y2="878.5" stroke="#a0a0a0" stroke-width="1.7" />
<line x1="692" y1="897.5" x2="710" y2="897.5" stroke="#a0a0a0" stroke-width="1.7" />
<line x1="692" y1="907.5" x2="710" y2="907.5" stroke="#a0a0a0" stroke-width="1.7" />
<line x1="692" y1="926.3" x2="710" y2="926.3" stroke="#a0a0a0" stroke-width="1.7" />
<line x1="703.2" y1="720.3" x2="710" y2="720.3" stroke="#909090" stroke-width="1.6" />
<line x1="703.2" y1="729.6" x2="710" y2="729.6" stroke="#909090" stroke-width="1.6" />
<line x1="703.2" y1="748" x2="710" y2="748" stroke="#909090" stroke-width="1.6" />
<line x1="703.2" y1="757.2" x2="710" y2="757.2" stroke="#909090" stroke-width="1.6" />
<line x1="703.2" y1="775.5" x2="710" y2="775.5" stroke="#909090" stroke-width="1.6" />
<line x1="703.2" y1="784.7" x2="710" y2="784.7" stroke="#909090" stroke-width="1.6" />
<line x1="703.2" y1="803" x2="710" y2="803" stroke="#909090" stroke-width="1.6" />
<line x1="703.2" y1="812.2" x2="710" y2="812.2" stroke="#909090" stroke-width="1.6" />
<line x1="704" y1="825.38" x2="710" y2="825.38" stroke="#8a8a8a" stroke-width="1.1" />
<line x1="704" y1="829.75" x2="710" y2="829.75" stroke="#8a8a8a" stroke-width="1.1" />
<line x1="704" y1="834.12" x2="710" y2="834.12" stroke="#8a8a8a" stroke-width="1.1" />
<line x1="704" y1="843" x2="710" y2="843" stroke="#8a8a8a" stroke-width="1.1" />
<line x1="704" y1="847.5" x2="710" y2="847.5" stroke="#8a8a8a" stroke-width="1.1" />
<line x1="704" y1="852" x2="710" y2="852" stroke="#8a8a8a" stroke-width="1.1" />
<line x1="704" y1="856.5" x2="710" y2="856.5" stroke="#8a8a8a" stroke-width="1.1" />
<line x1="704" y1="864.5" x2="710" y2="864.5" stroke="#8a8a8a" stroke-width="1.1" />
<line x1="704" y1="868" x2="710" y2="868" stroke="#8a8a8a" stroke-width="1.1" />
<line x1="704" y1="871.5" x2="710" y2="871.5" stroke="#8a8a8a" stroke-width="1.1" />
<line x1="704" y1="875" x2="710" y2="875" stroke="#8a8a8a" stroke-width="1.1" />
<line x1="704" y1="882.3" x2="710" y2="882.3" stroke="#8a8a8a" stroke-width="1.1" />
<line x1="704" y1="886.1" x2="710" y2="886.1" stroke="#8a8a8a" stroke-width="1.1" />
<line x1="704" y1="889.9" x2="710" y2="889.9" stroke="#8a8a8a" stroke-width="1.1" />
<line x1="704" y1="893.7" x2="710" y2="893.7" stroke="#8a8a8a" stroke-width="1.1" />
<line x1="704" y1="900.83" x2="710" y2="900.83" stroke="#8a8a8a" stroke-width="1.1" />
<line x1="704" y1="904.17" x2="710" y2="904.17" stroke="#8a8a8a" stroke-width="1.1" />
<line x1="704" y1="911.26" x2="710" y2="911.26" stroke="#8a8a8a" stroke-width="1.1" />
<line x1="704" y1="915.02" x2="710" y2="915.02" stroke="#8a8a8a" stroke-width="1.1" />
<line x1="704" y1="918.78" x2="710" y2="918.78" stroke="#8a8a8a" stroke-width="1.1" />
<line x1="704" y1="922.54" x2="710" y2="922.54" stroke="#8a8a8a" stroke-width="1.1" />
<rect x="711.1" y="709.8" width="3.2" height="218.2" fill="#3a3a3a" rx="1.5"/>
<rect x="697.9" y="739.5" width="29.4" height="56.8" fill="#3a3a3a" rx="2.5" opacity="0.6"/>
<rect x="698.8" y="738.3" width="27.7" height="56.1" fill="#8c8e8e" rx="2"/>
<rect x="698.8" y="738.3" width="27.7" height="8.3" fill="url(#fcTop)" rx="2"/>
<rect x="698.8" y="746.6" width="27.7" height="19.2" fill="url(#fcMidT)"/>
<rect x="698.8" y="766.8" width="27.7" height="19.6" fill="url(#fcMidB)"/>
<rect x="698.8" y="786.4" width="27.7" height="8" fill="url(#fcBot)" rx="2"/>
<line x1="698.8" y1="749.8" x2="726.5" y2="749.8" stroke="#7c7e7e" stroke-width="0.8" />
<line x1="698.8" y1="753.7" x2="726.5" y2="753.7" stroke="#7c7e7e" stroke-width="0.8" />
<line x1="698.8" y1="757.6" x2="726.5" y2="757.6" stroke="#7c7e7e" stroke-width="0.8" />
<line x1="698.8" y1="761.5" x2="726.5" y2="761.5" stroke="#7c7e7e" stroke-width="0.8" />
<line x1="698.8" y1="765.4" x2="726.5" y2="765.4" stroke="#7c7e7e" stroke-width="0.8" />
<line x1="698.8" y1="770.2" x2="726.5" y2="770.2" stroke="#d4d8d8" stroke-width="0.9" />
<line x1="698.8" y1="774.1" x2="726.5" y2="774.1" stroke="#d4d8d8" stroke-width="0.9" />
<line x1="698.8" y1="778" x2="726.5" y2="778" stroke="#d4d8d8" stroke-width="0.9" />
<line x1="698.8" y1="781.9" x2="726.5" y2="781.9" stroke="#d4d8d8" stroke-width="0.9" />
<line x1="698.8" y1="785.8" x2="726.5" y2="785.8" stroke="#d4d8d8" stroke-width="0.9" />
<line x1="698.8" y1="766.3" x2="726.5" y2="766.3" stroke="#2c2c2c" stroke-width="1.3" />
<line x1="692" y1="766.5" x2="698.8" y2="766.5" stroke="#ffffff" stroke-width="1.8" />
<rect x="758.3" y="706.7" width="18.4" height="221.6" fill="#383838" rx="2.5"/>
<text x="750.27" y="714.9" font-size="10.3" fill="#b8b8b8" text-anchor="end" letter-spacing="0.27" stroke="#b8b8b8" stroke-width="0.2">0</text>
<line x1="752.7" y1="711.2" x2="757.4" y2="711.2" stroke="#b4b4b4" stroke-width="1.6" />
<rect x="756" y="715.27" width="1.5" height="1.4" fill="#a8a8a8"/>
<rect x="756" y="720.03" width="1.5" height="1.4" fill="#a8a8a8"/>
<text x="750.27" y="729.2" font-size="10.3" fill="#b8b8b8" text-anchor="end" letter-spacing="0.27" stroke="#b8b8b8" stroke-width="0.2">3</text>
<line x1="752.7" y1="725.5" x2="757.4" y2="725.5" stroke="#b4b4b4" stroke-width="1.6" />
<rect x="756" y="729.5" width="1.5" height="1.4" fill="#a8a8a8"/>
<rect x="756" y="734.2" width="1.5" height="1.4" fill="#a8a8a8"/>
<text x="750.27" y="743.3" font-size="10.3" fill="#b8b8b8" text-anchor="end" letter-spacing="0.27" stroke="#b8b8b8" stroke-width="0.2">6</text>
<line x1="752.7" y1="739.6" x2="757.4" y2="739.6" stroke="#b4b4b4" stroke-width="1.6" />
<rect x="756" y="743.67" width="1.5" height="1.4" fill="#a8a8a8"/>
<rect x="756" y="748.43" width="1.5" height="1.4" fill="#a8a8a8"/>
<text x="750.27" y="757.6" font-size="10.3" fill="#b8b8b8" text-anchor="end" letter-spacing="0.27" stroke="#b8b8b8" stroke-width="0.2">9</text>
<line x1="752.7" y1="753.9" x2="757.4" y2="753.9" stroke="#b4b4b4" stroke-width="1.6" />
<rect x="756" y="757.93" width="1.5" height="1.4" fill="#a8a8a8"/>
<rect x="756" y="762.67" width="1.5" height="1.4" fill="#a8a8a8"/>
<text x="750.12" y="771.8" font-size="10.3" fill="#b8b8b8" text-anchor="end" letter-spacing="0.12" stroke="#b8b8b8" stroke-width="0.2">12</text>
<line x1="752.7" y1="768.1" x2="757.4" y2="768.1" stroke="#b4b4b4" stroke-width="1.6" />
<rect x="756" y="772.2" width="1.5" height="1.4" fill="#a8a8a8"/>
<rect x="756" y="777" width="1.5" height="1.4" fill="#a8a8a8"/>
<text x="750.12" y="786.2" font-size="10.3" fill="#b8b8b8" text-anchor="end" letter-spacing="0.12" stroke="#b8b8b8" stroke-width="0.2">15</text>
<line x1="752.7" y1="782.5" x2="757.4" y2="782.5" stroke="#b4b4b4" stroke-width="1.6" />
<rect x="756" y="786.6" width="1.5" height="1.4" fill="#a8a8a8"/>
<rect x="756" y="791.4" width="1.5" height="1.4" fill="#a8a8a8"/>
<text x="750.12" y="800.6" font-size="10.3" fill="#b8b8b8" text-anchor="end" letter-spacing="0.12" stroke="#b8b8b8" stroke-width="0.2">18</text>
<line x1="752.7" y1="796.9" x2="757.4" y2="796.9" stroke="#b4b4b4" stroke-width="1.6" />
<rect x="756" y="800.97" width="1.5" height="1.4" fill="#a8a8a8"/>
<rect x="756" y="805.73" width="1.5" height="1.4" fill="#a8a8a8"/>
<text x="750.12" y="814.9" font-size="10.3" fill="#b8b8b8" text-anchor="end" letter-spacing="0.12" stroke="#b8b8b8" stroke-width="0.2">21</text>
<line x1="752.7" y1="811.2" x2="757.4" y2="811.2" stroke="#b4b4b4" stroke-width="1.6" />
<rect x="756" y="815.37" width="1.5" height="1.4" fill="#a8a8a8"/>
<rect x="756" y="820.23" width="1.5" height="1.4" fill="#a8a8a8"/>
<text x="750.12" y="829.5" font-size="10.3" fill="#b8b8b8" text-anchor="end" letter-spacing="0.12" stroke="#b8b8b8" stroke-width="0.2">24</text>
<line x1="752.7" y1="825.8" x2="757.4" y2="825.8" stroke="#b4b4b4" stroke-width="1.6" />
<rect x="756" y="829.97" width="1.5" height="1.4" fill="#a8a8a8"/>
<rect x="756" y="834.85" width="1.5" height="1.4" fill="#a8a8a8"/>
<rect x="756" y="839.72" width="1.5" height="1.4" fill="#a8a8a8"/>
<text x="750.12" y="849" font-size="10.3" fill="#b8b8b8" text-anchor="end" letter-spacing="0.12" stroke="#b8b8b8" stroke-width="0.2">30</text>
<line x1="752.7" y1="845.3" x2="757.4" y2="845.3" stroke="#b4b4b4" stroke-width="1.6" />
<rect x="756" y="849.83" width="1.5" height="1.4" fill="#a8a8a8"/>
<rect x="756" y="855.07" width="1.5" height="1.4" fill="#a8a8a8"/>
<text x="750.12" y="864.7" font-size="10.3" fill="#b8b8b8" text-anchor="end" letter-spacing="0.12" stroke="#b8b8b8" stroke-width="0.2">35</text>
<line x1="752.7" y1="861" x2="757.4" y2="861" stroke="#b4b4b4" stroke-width="1.6" />
<rect x="756" y="865.57" width="1.5" height="1.4" fill="#a8a8a8"/>
<rect x="756" y="870.83" width="1.5" height="1.4" fill="#a8a8a8"/>
<text x="750.12" y="880.5" font-size="10.3" fill="#b8b8b8" text-anchor="end" letter-spacing="0.12" stroke="#b8b8b8" stroke-width="0.2">40</text>
<line x1="752.7" y1="876.8" x2="757.4" y2="876.8" stroke="#b4b4b4" stroke-width="1.6" />
<rect x="756" y="881.43" width="1.5" height="1.4" fill="#a8a8a8"/>
<rect x="756" y="886.77" width="1.5" height="1.4" fill="#a8a8a8"/>
<text x="750.12" y="896.5" font-size="10.3" fill="#b8b8b8" text-anchor="end" letter-spacing="0.12" stroke="#b8b8b8" stroke-width="0.2">45</text>
<line x1="752.7" y1="892.8" x2="757.4" y2="892.8" stroke="#b4b4b4" stroke-width="1.6" />
<rect x="756" y="897.43" width="1.5" height="1.4" fill="#a8a8a8"/>
<rect x="756" y="902.77" width="1.5" height="1.4" fill="#a8a8a8"/>
<text x="750.12" y="912.5" font-size="10.3" fill="#b8b8b8" text-anchor="end" letter-spacing="0.12" stroke="#b8b8b8" stroke-width="0.2">50</text>
<line x1="752.7" y1="908.8" x2="757.4" y2="908.8" stroke="#b4b4b4" stroke-width="1.6" />
<rect x="756" y="913.33" width="1.5" height="1.4" fill="#a8a8a8"/>
<rect x="756" y="918.57" width="1.5" height="1.4" fill="#a8a8a8"/>
<text x="750.12" y="928.2" font-size="10.3" fill="#b8b8b8" text-anchor="end" letter-spacing="0.12" stroke="#b8b8b8" stroke-width="0.2">60</text>
<line x1="752.7" y1="924.5" x2="757.4" y2="924.5" stroke="#b4b4b4" stroke-width="1.6" />
<rect x="760.8" y="795.8" width="4.9" height="130" fill="#4cd864"/>
<rect x="768.9" y="795.8" width="4.9" height="130" fill="#4cd864"/>
<rect x="745" y="938" width="49.5" height="25.2" fill="#474747" rx="6"/>
<rect x="745" y="937" width="49.5" height="25" fill="url(#btnG)" rx="6"/>
<line x1="769.5" y1="937" x2="769.5" y2="962" stroke="#4c4c4c" stroke-width="1.2" />
<text x="757" y="956" font-size="17.5" fill="#a01c14" text-anchor="middle">R</text>
<text x="782" y="956" font-size="17.5" fill="#ffffff" text-anchor="middle" stroke="#ffffff" stroke-width="0.25">I</text>
<rect x="687.5" y="970" width="49.5" height="25.2" fill="#474747" rx="6"/>
<rect x="687.5" y="969" width="49.5" height="25" fill="url(#btnG)" rx="6"/>
<text x="712.2" y="988" font-size="17.5" fill="#ffffff" text-anchor="middle" stroke="#ffffff" stroke-width="0.25">M</text>
<rect x="745" y="970" width="49.5" height="25.2" fill="#474747" rx="6"/>
<rect x="745" y="969" width="49.5" height="25" fill="url(#btnG)" rx="6"/>
<text x="769.7" y="988" font-size="17.5" fill="#ffffff" text-anchor="middle" stroke="#ffffff" stroke-width="0.25">S</text>
<text x="742.67" y="1035.5" font-size="17" fill="#e4e4e4" text-anchor="middle" letter-spacing="0.34">Audio 1</text>
<rect x="830.2" y="222" width="108" height="26.2" fill="#474747" rx="6"/>
<rect x="830.2" y="221" width="108" height="26" fill="url(#btnG)" rx="6"/>
<text x="883.87" y="240.5" font-size="17.5" fill="#262626" text-anchor="middle" letter-spacing="0.33" stroke="#262626" stroke-width="0.3">Réglage</text>
<rect x="829.2" y="253.5" width="110.5" height="13.5" fill="#505050"/>
<rect x="829.2" y="271" width="110.5" height="49" fill="#505050"/>
<text x="883.88" y="302" font-size="17.5" fill="#2a2a2a" text-anchor="middle" letter-spacing="-0.64" stroke="#262626" stroke-width="0.3">ÉG</text>
<rect x="830.2" y="343.5" width="108" height="26.2" fill="#474747" rx="6"/>
<rect x="830.2" y="342.5" width="108" height="26" fill="url(#btnG)" rx="6"/>
<circle cx="880.64" cy="355.7" r="5.7" fill="none" stroke="#ffffff" stroke-width="1.6"/>
<circle cx="888.16" cy="355.7" r="5.7" fill="none" stroke="#ffffff" stroke-width="1.6"/>
<rect x="830.2" y="382.5" width="108" height="26" fill="#525252" rx="6"/>
<text x="884.33" y="402" font-size="17.5" fill="#2a2a2a" text-anchor="middle" letter-spacing="0.25" stroke="#262626" stroke-width="0.3">Audio FX</text>
<rect x="830.2" y="502.5" width="108" height="28.5" fill="#474747"/>
<text x="884.5" y="523" font-size="17.5" fill="#2a2a2a" text-anchor="middle" letter-spacing="0.61" stroke="#262626" stroke-width="0.3">Groupe</text>
<rect x="830.2" y="542" width="108" height="25.7" fill="#474747" rx="6"/>
<rect x="830.2" y="541" width="108" height="25.5" fill="url(#btnG)" rx="6"/>
<text x="884.1" y="560" font-size="17.5" fill="#66de78" text-anchor="middle" letter-spacing="-0.21">Read</text>
<path d="M871.49 630.21 A25.45 25.45 0 1 1 897.71 630.21" fill="none" stroke="#3b3b3b" stroke-width="6.3"/>
<circle cx="884.6" cy="609.6" r="22.2" fill="#4c4c4c"/>
<circle cx="884.6" cy="608.4" r="22.2" fill="url(#panG)"/>
<line x1="884.6" y1="579.8" x2="884.6" y2="586.1" stroke="#3c8e4a" stroke-width="1.4" />
<line x1="884.6" y1="589" x2="884.6" y2="593.8" stroke="#141414" stroke-width="2" />
<rect x="829.2" y="647.5" width="52.5" height="28" fill="#383838"/>
<rect x="886.7" y="647.5" width="53" height="28" fill="#383838"/>
<text x="855.28" y="668.3" font-size="17" fill="#ffffff" text-anchor="middle" letter-spacing="0.46">0,0</text>
<line x1="835.7" y1="711.8" x2="853.7" y2="711.8" stroke="#a0a0a0" stroke-width="1.7" />
<line x1="835.7" y1="739.2" x2="853.7" y2="739.2" stroke="#a0a0a0" stroke-width="1.7" />
<line x1="835.7" y1="766.5" x2="853.7" y2="766.5" stroke="#a0a0a0" stroke-width="1.7" />
<line x1="835.7" y1="793.8" x2="853.7" y2="793.8" stroke="#a0a0a0" stroke-width="1.7" />
<line x1="835.7" y1="821" x2="853.7" y2="821" stroke="#a0a0a0" stroke-width="1.7" />
<line x1="835.7" y1="838.5" x2="853.7" y2="838.5" stroke="#a0a0a0" stroke-width="1.7" />
<line x1="835.7" y1="861" x2="853.7" y2="861" stroke="#a0a0a0" stroke-width="1.7" />
<line x1="835.7" y1="878.5" x2="853.7" y2="878.5" stroke="#a0a0a0" stroke-width="1.7" />
<line x1="835.7" y1="897.5" x2="853.7" y2="897.5" stroke="#a0a0a0" stroke-width="1.7" />
<line x1="835.7" y1="907.5" x2="853.7" y2="907.5" stroke="#a0a0a0" stroke-width="1.7" />
<line x1="835.7" y1="926.3" x2="853.7" y2="926.3" stroke="#a0a0a0" stroke-width="1.7" />
<line x1="846.9" y1="720.3" x2="853.7" y2="720.3" stroke="#909090" stroke-width="1.6" />
<line x1="846.9" y1="729.6" x2="853.7" y2="729.6" stroke="#909090" stroke-width="1.6" />
<line x1="846.9" y1="748" x2="853.7" y2="748" stroke="#909090" stroke-width="1.6" />
<line x1="846.9" y1="757.2" x2="853.7" y2="757.2" stroke="#909090" stroke-width="1.6" />
<line x1="846.9" y1="775.5" x2="853.7" y2="775.5" stroke="#909090" stroke-width="1.6" />
<line x1="846.9" y1="784.7" x2="853.7" y2="784.7" stroke="#909090" stroke-width="1.6" />
<line x1="846.9" y1="803" x2="853.7" y2="803" stroke="#909090" stroke-width="1.6" />
<line x1="846.9" y1="812.2" x2="853.7" y2="812.2" stroke="#909090" stroke-width="1.6" />
<line x1="847.7" y1="825.38" x2="853.7" y2="825.38" stroke="#8a8a8a" stroke-width="1.1" />
<line x1="847.7" y1="829.75" x2="853.7" y2="829.75" stroke="#8a8a8a" stroke-width="1.1" />
<line x1="847.7" y1="834.12" x2="853.7" y2="834.12" stroke="#8a8a8a" stroke-width="1.1" />
<line x1="847.7" y1="843" x2="853.7" y2="843" stroke="#8a8a8a" stroke-width="1.1" />
<line x1="847.7" y1="847.5" x2="853.7" y2="847.5" stroke="#8a8a8a" stroke-width="1.1" />
<line x1="847.7" y1="852" x2="853.7" y2="852" stroke="#8a8a8a" stroke-width="1.1" />
<line x1="847.7" y1="856.5" x2="853.7" y2="856.5" stroke="#8a8a8a" stroke-width="1.1" />
<line x1="847.7" y1="864.5" x2="853.7" y2="864.5" stroke="#8a8a8a" stroke-width="1.1" />
<line x1="847.7" y1="868" x2="853.7" y2="868" stroke="#8a8a8a" stroke-width="1.1" />
<line x1="847.7" y1="871.5" x2="853.7" y2="871.5" stroke="#8a8a8a" stroke-width="1.1" />
<line x1="847.7" y1="875" x2="853.7" y2="875" stroke="#8a8a8a" stroke-width="1.1" />
<line x1="847.7" y1="882.3" x2="853.7" y2="882.3" stroke="#8a8a8a" stroke-width="1.1" />
<line x1="847.7" y1="886.1" x2="853.7" y2="886.1" stroke="#8a8a8a" stroke-width="1.1" />
<line x1="847.7" y1="889.9" x2="853.7" y2="889.9" stroke="#8a8a8a" stroke-width="1.1" />
<line x1="847.7" y1="893.7" x2="853.7" y2="893.7" stroke="#8a8a8a" stroke-width="1.1" />
<line x1="847.7" y1="900.83" x2="853.7" y2="900.83" stroke="#8a8a8a" stroke-width="1.1" />
<line x1="847.7" y1="904.17" x2="853.7" y2="904.17" stroke="#8a8a8a" stroke-width="1.1" />
<line x1="847.7" y1="911.26" x2="853.7" y2="911.26" stroke="#8a8a8a" stroke-width="1.1" />
<line x1="847.7" y1="915.02" x2="853.7" y2="915.02" stroke="#8a8a8a" stroke-width="1.1" />
<line x1="847.7" y1="918.78" x2="853.7" y2="918.78" stroke="#8a8a8a" stroke-width="1.1" />
<line x1="847.7" y1="922.54" x2="853.7" y2="922.54" stroke="#8a8a8a" stroke-width="1.1" />
<rect x="854.8" y="709.8" width="3.2" height="218.2" fill="#3a3a3a" rx="1.5"/>
<rect x="841.6" y="739.5" width="29.4" height="56.8" fill="#3a3a3a" rx="2.5" opacity="0.6"/>
<rect x="842.5" y="738.3" width="27.7" height="56.1" fill="#8c8e8e" rx="2"/>
<rect x="842.5" y="738.3" width="27.7" height="8.3" fill="url(#fcTop)" rx="2"/>
<rect x="842.5" y="746.6" width="27.7" height="19.2" fill="url(#fcMidT)"/>
<rect x="842.5" y="766.8" width="27.7" height="19.6" fill="url(#fcMidB)"/>
<rect x="842.5" y="786.4" width="27.7" height="8" fill="url(#fcBot)" rx="2"/>
<line x1="842.5" y1="749.8" x2="870.2" y2="749.8" stroke="#7c7e7e" stroke-width="0.8" />
<line x1="842.5" y1="753.7" x2="870.2" y2="753.7" stroke="#7c7e7e" stroke-width="0.8" />
<line x1="842.5" y1="757.6" x2="870.2" y2="757.6" stroke="#7c7e7e" stroke-width="0.8" />
<line x1="842.5" y1="761.5" x2="870.2" y2="761.5" stroke="#7c7e7e" stroke-width="0.8" />
<line x1="842.5" y1="765.4" x2="870.2" y2="765.4" stroke="#7c7e7e" stroke-width="0.8" />
<line x1="842.5" y1="770.2" x2="870.2" y2="770.2" stroke="#d4d8d8" stroke-width="0.9" />
<line x1="842.5" y1="774.1" x2="870.2" y2="774.1" stroke="#d4d8d8" stroke-width="0.9" />
<line x1="842.5" y1="778" x2="870.2" y2="778" stroke="#d4d8d8" stroke-width="0.9" />
<line x1="842.5" y1="781.9" x2="870.2" y2="781.9" stroke="#d4d8d8" stroke-width="0.9" />
<line x1="842.5" y1="785.8" x2="870.2" y2="785.8" stroke="#d4d8d8" stroke-width="0.9" />
<line x1="842.5" y1="766.3" x2="870.2" y2="766.3" stroke="#2c2c2c" stroke-width="1.3" />
<line x1="835.7" y1="766.5" x2="842.5" y2="766.5" stroke="#ffffff" stroke-width="1.8" />
<rect x="902" y="706.7" width="18.4" height="221.6" fill="#383838" rx="2.5"/>
<text x="893.97" y="714.9" font-size="10.3" fill="#b8b8b8" text-anchor="end" letter-spacing="0.27" stroke="#b8b8b8" stroke-width="0.2">0</text>
<line x1="896.4" y1="711.2" x2="901.1" y2="711.2" stroke="#b4b4b4" stroke-width="1.6" />
<rect x="899.7" y="715.27" width="1.5" height="1.4" fill="#a8a8a8"/>
<rect x="899.7" y="720.03" width="1.5" height="1.4" fill="#a8a8a8"/>
<text x="893.97" y="729.2" font-size="10.3" fill="#b8b8b8" text-anchor="end" letter-spacing="0.27" stroke="#b8b8b8" stroke-width="0.2">3</text>
<line x1="896.4" y1="725.5" x2="901.1" y2="725.5" stroke="#b4b4b4" stroke-width="1.6" />
<rect x="899.7" y="729.5" width="1.5" height="1.4" fill="#a8a8a8"/>
<rect x="899.7" y="734.2" width="1.5" height="1.4" fill="#a8a8a8"/>
<text x="893.97" y="743.3" font-size="10.3" fill="#b8b8b8" text-anchor="end" letter-spacing="0.27" stroke="#b8b8b8" stroke-width="0.2">6</text>
<line x1="896.4" y1="739.6" x2="901.1" y2="739.6" stroke="#b4b4b4" stroke-width="1.6" />
<rect x="899.7" y="743.67" width="1.5" height="1.4" fill="#a8a8a8"/>
<rect x="899.7" y="748.43" width="1.5" height="1.4" fill="#a8a8a8"/>
<text x="893.97" y="757.6" font-size="10.3" fill="#b8b8b8" text-anchor="end" letter-spacing="0.27" stroke="#b8b8b8" stroke-width="0.2">9</text>
<line x1="896.4" y1="753.9" x2="901.1" y2="753.9" stroke="#b4b4b4" stroke-width="1.6" />
<rect x="899.7" y="757.93" width="1.5" height="1.4" fill="#a8a8a8"/>
<rect x="899.7" y="762.67" width="1.5" height="1.4" fill="#a8a8a8"/>
<text x="893.82" y="771.8" font-size="10.3" fill="#b8b8b8" text-anchor="end" letter-spacing="0.12" stroke="#b8b8b8" stroke-width="0.2">12</text>
<line x1="896.4" y1="768.1" x2="901.1" y2="768.1" stroke="#b4b4b4" stroke-width="1.6" />
<rect x="899.7" y="772.2" width="1.5" height="1.4" fill="#a8a8a8"/>
<rect x="899.7" y="777" width="1.5" height="1.4" fill="#a8a8a8"/>
<text x="893.82" y="786.2" font-size="10.3" fill="#b8b8b8" text-anchor="end" letter-spacing="0.12" stroke="#b8b8b8" stroke-width="0.2">15</text>
<line x1="896.4" y1="782.5" x2="901.1" y2="782.5" stroke="#b4b4b4" stroke-width="1.6" />
<rect x="899.7" y="786.6" width="1.5" height="1.4" fill="#a8a8a8"/>
<rect x="899.7" y="791.4" width="1.5" height="1.4" fill="#a8a8a8"/>
<text x="893.82" y="800.6" font-size="10.3" fill="#b8b8b8" text-anchor="end" letter-spacing="0.12" stroke="#b8b8b8" stroke-width="0.2">18</text>
<line x1="896.4" y1="796.9" x2="901.1" y2="796.9" stroke="#b4b4b4" stroke-width="1.6" />
<rect x="899.7" y="800.97" width="1.5" height="1.4" fill="#a8a8a8"/>
<rect x="899.7" y="805.73" width="1.5" height="1.4" fill="#a8a8a8"/>
<text x="893.82" y="814.9" font-size="10.3" fill="#b8b8b8" text-anchor="end" letter-spacing="0.12" stroke="#b8b8b8" stroke-width="0.2">21</text>
<line x1="896.4" y1="811.2" x2="901.1" y2="811.2" stroke="#b4b4b4" stroke-width="1.6" />
<rect x="899.7" y="815.37" width="1.5" height="1.4" fill="#a8a8a8"/>
<rect x="899.7" y="820.23" width="1.5" height="1.4" fill="#a8a8a8"/>
<text x="893.82" y="829.5" font-size="10.3" fill="#b8b8b8" text-anchor="end" letter-spacing="0.12" stroke="#b8b8b8" stroke-width="0.2">24</text>
<line x1="896.4" y1="825.8" x2="901.1" y2="825.8" stroke="#b4b4b4" stroke-width="1.6" />
<rect x="899.7" y="829.97" width="1.5" height="1.4" fill="#a8a8a8"/>
<rect x="899.7" y="834.85" width="1.5" height="1.4" fill="#a8a8a8"/>
<rect x="899.7" y="839.72" width="1.5" height="1.4" fill="#a8a8a8"/>
<text x="893.82" y="849" font-size="10.3" fill="#b8b8b8" text-anchor="end" letter-spacing="0.12" stroke="#b8b8b8" stroke-width="0.2">30</text>
<line x1="896.4" y1="845.3" x2="901.1" y2="845.3" stroke="#b4b4b4" stroke-width="1.6" />
<rect x="899.7" y="849.83" width="1.5" height="1.4" fill="#a8a8a8"/>
<rect x="899.7" y="855.07" width="1.5" height="1.4" fill="#a8a8a8"/>
<text x="893.82" y="864.7" font-size="10.3" fill="#b8b8b8" text-anchor="end" letter-spacing="0.12" stroke="#b8b8b8" stroke-width="0.2">35</text>
<line x1="896.4" y1="861" x2="901.1" y2="861" stroke="#b4b4b4" stroke-width="1.6" />
<rect x="899.7" y="865.57" width="1.5" height="1.4" fill="#a8a8a8"/>
<rect x="899.7" y="870.83" width="1.5" height="1.4" fill="#a8a8a8"/>
<text x="893.82" y="880.5" font-size="10.3" fill="#b8b8b8" text-anchor="end" letter-spacing="0.12" stroke="#b8b8b8" stroke-width="0.2">40</text>
<line x1="896.4" y1="876.8" x2="901.1" y2="876.8" stroke="#b4b4b4" stroke-width="1.6" />
<rect x="899.7" y="881.43" width="1.5" height="1.4" fill="#a8a8a8"/>
<rect x="899.7" y="886.77" width="1.5" height="1.4" fill="#a8a8a8"/>
<text x="893.82" y="896.5" font-size="10.3" fill="#b8b8b8" text-anchor="end" letter-spacing="0.12" stroke="#b8b8b8" stroke-width="0.2">45</text>
<line x1="896.4" y1="892.8" x2="901.1" y2="892.8" stroke="#b4b4b4" stroke-width="1.6" />
<rect x="899.7" y="897.43" width="1.5" height="1.4" fill="#a8a8a8"/>
<rect x="899.7" y="902.77" width="1.5" height="1.4" fill="#a8a8a8"/>
<text x="893.82" y="912.5" font-size="10.3" fill="#b8b8b8" text-anchor="end" letter-spacing="0.12" stroke="#b8b8b8" stroke-width="0.2">50</text>
<line x1="896.4" y1="908.8" x2="901.1" y2="908.8" stroke="#b4b4b4" stroke-width="1.6" />
<rect x="899.7" y="913.33" width="1.5" height="1.4" fill="#a8a8a8"/>
<rect x="899.7" y="918.57" width="1.5" height="1.4" fill="#a8a8a8"/>
<text x="893.82" y="928.2" font-size="10.3" fill="#b8b8b8" text-anchor="end" letter-spacing="0.12" stroke="#b8b8b8" stroke-width="0.2">60</text>
<line x1="896.4" y1="924.5" x2="901.1" y2="924.5" stroke="#b4b4b4" stroke-width="1.6" />
<rect x="888.7" y="938" width="49.5" height="25.2" fill="#474747" rx="6"/>
<rect x="888.7" y="937" width="49.5" height="25" fill="url(#btnG)" rx="6"/>
<text x="913.54" y="956" font-size="17.5" fill="#ffffff" text-anchor="middle" letter-spacing="0.28" stroke="#ffffff" stroke-width="0.3">Bnc</text>
<rect x="831.2" y="970" width="49.5" height="25.2" fill="#474747" rx="6"/>
<rect x="831.2" y="969" width="49.5" height="25" fill="url(#btnG)" rx="6"/>
<text x="855.9" y="988" font-size="17.5" fill="#ffffff" text-anchor="middle" stroke="#ffffff" stroke-width="0.25">M</text>
<text x="886.7" y="1035.5" font-size="17" fill="#e4e4e4" text-anchor="middle" letter-spacing="1">Output</text>
</g>
<g id="mixer">
<rect x="957.1" y="0" width="2.9" height="1050.3" fill="#000000"/>
<rect x="959.9" y="0" width="385.1" height="1050.3" fill="#84befd"/>
<rect x="963.6" y="2.6" width="381.4" height="1045.4" fill="#2c2c2c"/>
<rect x="964.2" y="3" width="380.8" height="1044.5" fill="#585858"/>
<rect x="964.2" y="3" width="380.8" height="55" fill="#474747"/>
<line x1="964" y1="58" x2="1345" y2="58" stroke="#3e3e3e" stroke-width="1" />
<line x1="1122.3" y1="58" x2="1122.3" y2="1047" stroke="#1c1c1c" stroke-width="1.6" />
<line x1="1229.5" y1="58" x2="1229.5" y2="1047" stroke="#454545" stroke-width="1.2" />
<line x1="1336.3" y1="58" x2="1336.3" y2="1047" stroke="#454545" stroke-width="1.2" />
<rect x="976.3" y="14.2" width="52.3" height="31.6" fill="#525252" rx="7.5"/>
<path d="M995 27 L1002.5 20 L1010 27 M1002.5 20.5 V31.5 Q1002.5 37.5 1009.5 37.8" fill="none" stroke="#8c8c8c" stroke-width="1.8" stroke-linecap="round" stroke-linejoin="round"/>
<rect x="1043.5" y="14.2" width="356.5" height="31.6" fill="#5b5b5b" rx="7.5"/>
<line x1="1166.7" y1="15" x2="1166.7" y2="45.5" stroke="#4a4a4a" stroke-width="1.2" />
<line x1="1302" y1="15" x2="1302" y2="45.5" stroke="#4a4a4a" stroke-width="1.2" />
<text x="1059.5" y="36" font-size="20" fill="#ffffff" letter-spacing="0.69" stroke="#ffffff" stroke-width="0.5">Édition</text>
<path d="M1142.2 27.6 l4.8 4.8 l4.8 -4.8" fill="none" stroke="#b4b4b4" stroke-width="2" stroke-linecap="round" stroke-linejoin="round"/>
<text x="1184" y="36" font-size="20" fill="#ffffff" letter-spacing="0.87" stroke="#ffffff" stroke-width="0.5">Options</text>
<path d="M1276.7 27.6 l4.8 4.8 l4.8 -4.8" fill="none" stroke="#b4b4b4" stroke-width="2" stroke-linecap="round" stroke-linejoin="round"/>
<text x="1318" y="36" font-size="20" fill="#ffffff" stroke="#ffffff" stroke-width="0.5">Présentation</text>
<text x="1110.76" y="143" font-size="17.5" fill="#b6b6b6" text-anchor="end" letter-spacing="0.26">Réglage</text>
<text x="1110.55" y="168.7" font-size="17.5" fill="#b6b6b6" text-anchor="end" letter-spacing="0.05">Réduction du gain</text>
<text x="1109.36" y="207.7" font-size="17.5" fill="#b6b6b6" text-anchor="end" letter-spacing="-1.14">ÉG</text>
<text x="1110.74" y="266" font-size="17.5" fill="#b6b6b6" text-anchor="end" letter-spacing="0.24">Entrée</text>
<text x="1110.63" y="307.7" font-size="17.5" fill="#b6b6b6" text-anchor="end" letter-spacing="0.13">Audio FX</text>
<text x="1110.58" y="349" font-size="17.5" fill="#b6b6b6" text-anchor="end" letter-spacing="0.08">Envois</text>
<text x="1111.05" y="390.2" font-size="17.5" fill="#b6b6b6" text-anchor="end" letter-spacing="0.55">Sortie</text>
<text x="1110.94" y="426.7" font-size="17.5" fill="#b6b6b6" text-anchor="end" letter-spacing="0.44">Groupe</text>
<text x="1111.05" y="464" font-size="17.5" fill="#b6b6b6" text-anchor="end" letter-spacing="0.55">Automation</text>
<text x="1110.12" y="575.7" font-size="17.5" fill="#b6b6b6" text-anchor="end" letter-spacing="-0.38">Pan</text>
<text x="1110.17" y="630.3" font-size="17.5" fill="#b6b6b6" text-anchor="end" letter-spacing="-0.33">VCA</text>
<text x="1110.8" y="666.8" font-size="17.5" fill="#b6b6b6" text-anchor="end" letter-spacing="0.3">dB</text>
<g transform="translate(0,-1.5)">
<text x="1099.87" y="715.5" font-size="10.3" fill="#b8b8b8" text-anchor="end" letter-spacing="0.27" stroke="#b8b8b8" stroke-width="0.2">6</text>
<line x1="1104" y1="711.8" x2="1121.3" y2="711.8" stroke="#a0a0a0" stroke-width="1.7" />
<text x="1099.87" y="742.9" font-size="10.3" fill="#b8b8b8" text-anchor="end" letter-spacing="0.27" stroke="#b8b8b8" stroke-width="0.2">3</text>
<line x1="1104" y1="739.2" x2="1121.3" y2="739.2" stroke="#a0a0a0" stroke-width="1.7" />
<text x="1099.87" y="770.2" font-size="10.3" fill="#b8b8b8" text-anchor="end" letter-spacing="0.27" stroke="#b8b8b8" stroke-width="0.2">0</text>
<line x1="1104" y1="766.5" x2="1121.3" y2="766.5" stroke="#ffffff" stroke-width="1.7" />
<text x="1099.87" y="797.5" font-size="10.3" fill="#b8b8b8" text-anchor="end" letter-spacing="0.27" stroke="#b8b8b8" stroke-width="0.2">3</text>
<line x1="1104" y1="793.8" x2="1121.3" y2="793.8" stroke="#a0a0a0" stroke-width="1.7" />
<text x="1099.87" y="824.7" font-size="10.3" fill="#b8b8b8" text-anchor="end" letter-spacing="0.27" stroke="#b8b8b8" stroke-width="0.2">6</text>
<line x1="1104" y1="821" x2="1121.3" y2="821" stroke="#a0a0a0" stroke-width="1.7" />
<text x="1099.72" y="842.2" font-size="10.3" fill="#b8b8b8" text-anchor="end" letter-spacing="0.12" stroke="#b8b8b8" stroke-width="0.2">10</text>
<line x1="1104" y1="838.5" x2="1121.3" y2="838.5" stroke="#a0a0a0" stroke-width="1.7" />
<text x="1099.72" y="864.7" font-size="10.3" fill="#b8b8b8" text-anchor="end" letter-spacing="0.12" stroke="#b8b8b8" stroke-width="0.2">15</text>
<line x1="1104" y1="861" x2="1121.3" y2="861" stroke="#a0a0a0" stroke-width="1.7" />
<text x="1099.72" y="882.2" font-size="10.3" fill="#b8b8b8" text-anchor="end" letter-spacing="0.12" stroke="#b8b8b8" stroke-width="0.2">20</text>
<line x1="1104" y1="878.5" x2="1121.3" y2="878.5" stroke="#a0a0a0" stroke-width="1.7" />
<text x="1099.72" y="901.2" font-size="10.3" fill="#b8b8b8" text-anchor="end" letter-spacing="0.12" stroke="#b8b8b8" stroke-width="0.2">30</text>
<line x1="1104" y1="897.5" x2="1121.3" y2="897.5" stroke="#a0a0a0" stroke-width="1.7" />
<text x="1099.72" y="911.2" font-size="10.3" fill="#b8b8b8" text-anchor="end" letter-spacing="0.12" stroke="#b8b8b8" stroke-width="0.2">40</text>
<line x1="1104" y1="907.5" x2="1121.3" y2="907.5" stroke="#a0a0a0" stroke-width="1.7" />
<text x="1100.2" y="931.9" font-size="19" fill="#b4b4b4" text-anchor="end">∞</text>
<line x1="1104" y1="926.3" x2="1121.3" y2="926.3" stroke="#a0a0a0" stroke-width="1.7" />
<line x1="1114.7" y1="720.3" x2="1121.3" y2="720.3" stroke="#909090" stroke-width="1.6" />
<line x1="1114.7" y1="729.6" x2="1121.3" y2="729.6" stroke="#909090" stroke-width="1.6" />
<line x1="1114.7" y1="748" x2="1121.3" y2="748" stroke="#909090" stroke-width="1.6" />
<line x1="1114.7" y1="757.2" x2="1121.3" y2="757.2" stroke="#909090" stroke-width="1.6" />
<line x1="1114.7" y1="775.5" x2="1121.3" y2="775.5" stroke="#909090" stroke-width="1.6" />
<line x1="1114.7" y1="784.7" x2="1121.3" y2="784.7" stroke="#909090" stroke-width="1.6" />
<line x1="1114.7" y1="803" x2="1121.3" y2="803" stroke="#909090" stroke-width="1.6" />
<line x1="1114.7" y1="812.2" x2="1121.3" y2="812.2" stroke="#909090" stroke-width="1.6" />
<line x1="1115.5" y1="825.38" x2="1121.3" y2="825.38" stroke="#8a8a8a" stroke-width="1.1" />
<line x1="1115.5" y1="829.75" x2="1121.3" y2="829.75" stroke="#8a8a8a" stroke-width="1.1" />
<line x1="1115.5" y1="834.12" x2="1121.3" y2="834.12" stroke="#8a8a8a" stroke-width="1.1" />
<line x1="1115.5" y1="843" x2="1121.3" y2="843" stroke="#8a8a8a" stroke-width="1.1" />
<line x1="1115.5" y1="847.5" x2="1121.3" y2="847.5" stroke="#8a8a8a" stroke-width="1.1" />
<line x1="1115.5" y1="852" x2="1121.3" y2="852" stroke="#8a8a8a" stroke-width="1.1" />
<line x1="1115.5" y1="856.5" x2="1121.3" y2="856.5" stroke="#8a8a8a" stroke-width="1.1" />
<line x1="1115.5" y1="864.5" x2="1121.3" y2="864.5" stroke="#8a8a8a" stroke-width="1.1" />
<line x1="1115.5" y1="868" x2="1121.3" y2="868" stroke="#8a8a8a" stroke-width="1.1" />
<line x1="1115.5" y1="871.5" x2="1121.3" y2="871.5" stroke="#8a8a8a" stroke-width="1.1" />
<line x1="1115.5" y1="875" x2="1121.3" y2="875" stroke="#8a8a8a" stroke-width="1.1" />
<line x1="1115.5" y1="882.3" x2="1121.3" y2="882.3" stroke="#8a8a8a" stroke-width="1.1" />
<line x1="1115.5" y1="886.1" x2="1121.3" y2="886.1" stroke="#8a8a8a" stroke-width="1.1" />
<line x1="1115.5" y1="889.9" x2="1121.3" y2="889.9" stroke="#8a8a8a" stroke-width="1.1" />
<line x1="1115.5" y1="893.7" x2="1121.3" y2="893.7" stroke="#8a8a8a" stroke-width="1.1" />
<line x1="1115.5" y1="900.83" x2="1121.3" y2="900.83" stroke="#8a8a8a" stroke-width="1.1" />
<line x1="1115.5" y1="904.17" x2="1121.3" y2="904.17" stroke="#8a8a8a" stroke-width="1.1" />
<line x1="1115.5" y1="911.26" x2="1121.3" y2="911.26" stroke="#8a8a8a" stroke-width="1.1" />
<line x1="1115.5" y1="915.02" x2="1121.3" y2="915.02" stroke="#8a8a8a" stroke-width="1.1" />
<line x1="1115.5" y1="918.78" x2="1121.3" y2="918.78" stroke="#8a8a8a" stroke-width="1.1" />
<line x1="1115.5" y1="922.54" x2="1121.3" y2="922.54" stroke="#8a8a8a" stroke-width="1.1" />
</g>
<rect x="1129.3" y="79.5" width="64" height="28" fill="#383838"/>
<text x="1161.07" y="100" font-size="17" fill="#ffffff" text-anchor="middle" letter-spacing="-0.45">12</text>
<path d="M1205.05 102.8 A10.85 10.85 0 0 1 1210.8 82.75" fill="none" stroke="#3a3a3a" stroke-width="4.3"/>
<path d="M1210.8 82.75 A10.85 10.85 0 0 1 1216.55 102.8" fill="none" stroke="#7fbbfc" stroke-width="4.3"/>
<circle cx="1210.8" cy="94" r="8.1" fill="#6e6e6e"/>
<circle cx="1210.8" cy="93.6" r="7.9" fill="#8a8a8a"/>
<rect x="1131" y="125" width="89.5" height="25.7" fill="#474747" rx="6"/>
<rect x="1131" y="124" width="89.5" height="25.5" fill="url(#btnG)" rx="6"/>
<text x="1175.57" y="143" font-size="17.5" fill="#262626" text-anchor="middle" letter-spacing="0.33" stroke="#262626" stroke-width="0.3">Réglage</text>
<rect x="1129.5" y="157.5" width="92.5" height="14" fill="#505050"/>
<rect x="1129.5" y="178.5" width="92.5" height="46" fill="#505050"/>
<rect x="1131" y="248" width="89.5" height="25.7" fill="#474747" rx="6"/>
<rect x="1131" y="247" width="89.5" height="25.5" fill="url(#btnG)" rx="6"/>
<line x1="1159" y1="247" x2="1159" y2="272.5" stroke="#4c4c4c" stroke-width="1.2" />
<circle cx="1140.94" cy="260" r="5.7" fill="none" stroke="#ffffff" stroke-width="1.6"/>
<circle cx="1148.46" cy="260" r="5.7" fill="none" stroke="#ffffff" stroke-width="1.6"/>
<text x="1189.55" y="266.3" font-size="17.5" fill="#ffffff" text-anchor="middle" letter-spacing="-0.3" stroke="#ffffff" stroke-width="0.25">In 1</text>
<rect x="1131" y="288" width="89.5" height="26.5" fill="#525252" rx="6"/>
<rect x="1131" y="330" width="61" height="26" fill="#525252" rx="6"/>
<circle cx="1210.8" cy="343" r="12.5" fill="#525252"/>
<rect x="1131" y="372.5" width="89.5" height="25.7" fill="#474747" rx="6"/>
<rect x="1131" y="371.5" width="89.5" height="25.5" fill="url(#btnG)" rx="6"/>
<text x="1175.3" y="390.5" font-size="17.5" fill="#ffffff" text-anchor="middle" letter-spacing="0.6" stroke="#ffffff" stroke-width="0.25">Out</text>
<rect x="1131" y="406.5" width="89.5" height="28.5" fill="#474747"/>
<rect x="1131" y="446" width="89.5" height="25.7" fill="#474747" rx="6"/>
<rect x="1131" y="445" width="89.5" height="25.5" fill="url(#btnG)" rx="6"/>
<text x="1174.6" y="464" font-size="17.5" fill="#66de78" text-anchor="middle" letter-spacing="-0.21">Read</text>
<rect x="1152" y="488.5" width="48" height="34.5" fill="url(#icong)" rx="3" stroke="#262e3a" stroke-width="1"/>
<rect x="1157.33" y="504.42" width="2.02" height="2.66" fill="#4db2f8" rx="1.01"/>
<rect x="1160.54" y="501.72" width="2.02" height="8.07" fill="#4db2f8" rx="1.01"/>
<rect x="1163.75" y="502.64" width="2.02" height="6.21" fill="#4db2f8" rx="1.01"/>
<rect x="1166.96" y="498.65" width="2.02" height="14.2" fill="#4db2f8" rx="1.01"/>
<rect x="1170.18" y="501.72" width="2.02" height="8.07" fill="#4db2f8" rx="1.01"/>
<rect x="1173.39" y="498.53" width="2.02" height="14.44" fill="#4db2f8" rx="1.01"/>
<rect x="1176.6" y="493.81" width="2.02" height="23.88" fill="#4db2f8" rx="1.01"/>
<rect x="1179.81" y="498.65" width="2.02" height="14.2" fill="#4db2f8" rx="1.01"/>
<rect x="1183.02" y="501.84" width="2.02" height="7.83" fill="#4db2f8" rx="1.01"/>
<rect x="1186.23" y="499.58" width="2.02" height="12.34" fill="#4db2f8" rx="1.01"/>
<rect x="1189.44" y="501.72" width="2.02" height="8.07" fill="#4db2f8" rx="1.01"/>
<rect x="1192.65" y="504.42" width="2.02" height="2.66" fill="#4db2f8" rx="1.01"/>
<path d="M1163.29 593.51 A25.45 25.45 0 1 1 1189.51 593.51" fill="none" stroke="#3b3b3b" stroke-width="6.3"/>
<circle cx="1176.4" cy="572.9" r="22.2" fill="#4c4c4c"/>
<circle cx="1176.4" cy="571.7" r="22.2" fill="url(#panG)"/>
<line x1="1176.4" y1="543.1" x2="1176.4" y2="549.4" stroke="#3c8e4a" stroke-width="1.4" />
<line x1="1176.4" y1="552.3" x2="1176.4" y2="557.1" stroke="#141414" stroke-width="2" />
<rect x="1131" y="609" width="89.5" height="29" fill="#474747"/>
<rect x="1131" y="646" width="43.3" height="28.5" fill="#383838"/>
<rect x="1177.5" y="646" width="43" height="28.5" fill="#383838"/>
<text x="1152.48" y="667.3" font-size="17" fill="#ffffff" text-anchor="middle" letter-spacing="0.46">0,0</text>
<text x="1199.21" y="667.3" font-size="17" fill="#e6c02e" text-anchor="middle" letter-spacing="0.43">-0,1</text>
<g transform="translate(0,-1.5)">
<line x1="1129.6" y1="711.8" x2="1147.6" y2="711.8" stroke="#a0a0a0" stroke-width="1.7" />
<line x1="1129.6" y1="739.2" x2="1147.6" y2="739.2" stroke="#a0a0a0" stroke-width="1.7" />
<line x1="1129.6" y1="766.5" x2="1147.6" y2="766.5" stroke="#a0a0a0" stroke-width="1.7" />
<line x1="1129.6" y1="793.8" x2="1147.6" y2="793.8" stroke="#a0a0a0" stroke-width="1.7" />
<line x1="1129.6" y1="821" x2="1147.6" y2="821" stroke="#a0a0a0" stroke-width="1.7" />
<line x1="1129.6" y1="838.5" x2="1147.6" y2="838.5" stroke="#a0a0a0" stroke-width="1.7" />
<line x1="1129.6" y1="861" x2="1147.6" y2="861" stroke="#a0a0a0" stroke-width="1.7" />
<line x1="1129.6" y1="878.5" x2="1147.6" y2="878.5" stroke="#a0a0a0" stroke-width="1.7" />
<line x1="1129.6" y1="897.5" x2="1147.6" y2="897.5" stroke="#a0a0a0" stroke-width="1.7" />
<line x1="1129.6" y1="907.5" x2="1147.6" y2="907.5" stroke="#a0a0a0" stroke-width="1.7" />
<line x1="1129.6" y1="926.3" x2="1147.6" y2="926.3" stroke="#a0a0a0" stroke-width="1.7" />
<line x1="1140.8" y1="720.3" x2="1147.6" y2="720.3" stroke="#909090" stroke-width="1.6" />
<line x1="1140.8" y1="729.6" x2="1147.6" y2="729.6" stroke="#909090" stroke-width="1.6" />
<line x1="1140.8" y1="748" x2="1147.6" y2="748" stroke="#909090" stroke-width="1.6" />
<line x1="1140.8" y1="757.2" x2="1147.6" y2="757.2" stroke="#909090" stroke-width="1.6" />
<line x1="1140.8" y1="775.5" x2="1147.6" y2="775.5" stroke="#909090" stroke-width="1.6" />
<line x1="1140.8" y1="784.7" x2="1147.6" y2="784.7" stroke="#909090" stroke-width="1.6" />
<line x1="1140.8" y1="803" x2="1147.6" y2="803" stroke="#909090" stroke-width="1.6" />
<line x1="1140.8" y1="812.2" x2="1147.6" y2="812.2" stroke="#909090" stroke-width="1.6" />
<line x1="1141.6" y1="825.38" x2="1147.6" y2="825.38" stroke="#8a8a8a" stroke-width="1.1" />
<line x1="1141.6" y1="829.75" x2="1147.6" y2="829.75" stroke="#8a8a8a" stroke-width="1.1" />
<line x1="1141.6" y1="834.12" x2="1147.6" y2="834.12" stroke="#8a8a8a" stroke-width="1.1" />
<line x1="1141.6" y1="843" x2="1147.6" y2="843" stroke="#8a8a8a" stroke-width="1.1" />
<line x1="1141.6" y1="847.5" x2="1147.6" y2="847.5" stroke="#8a8a8a" stroke-width="1.1" />
<line x1="1141.6" y1="852" x2="1147.6" y2="852" stroke="#8a8a8a" stroke-width="1.1" />
<line x1="1141.6" y1="856.5" x2="1147.6" y2="856.5" stroke="#8a8a8a" stroke-width="1.1" />
<line x1="1141.6" y1="864.5" x2="1147.6" y2="864.5" stroke="#8a8a8a" stroke-width="1.1" />
<line x1="1141.6" y1="868" x2="1147.6" y2="868" stroke="#8a8a8a" stroke-width="1.1" />
<line x1="1141.6" y1="871.5" x2="1147.6" y2="871.5" stroke="#8a8a8a" stroke-width="1.1" />
<line x1="1141.6" y1="875" x2="1147.6" y2="875" stroke="#8a8a8a" stroke-width="1.1" />
<line x1="1141.6" y1="882.3" x2="1147.6" y2="882.3" stroke="#8a8a8a" stroke-width="1.1" />
<line x1="1141.6" y1="886.1" x2="1147.6" y2="886.1" stroke="#8a8a8a" stroke-width="1.1" />
<line x1="1141.6" y1="889.9" x2="1147.6" y2="889.9" stroke="#8a8a8a" stroke-width="1.1" />
<line x1="1141.6" y1="893.7" x2="1147.6" y2="893.7" stroke="#8a8a8a" stroke-width="1.1" />
<line x1="1141.6" y1="900.83" x2="1147.6" y2="900.83" stroke="#8a8a8a" stroke-width="1.1" />
<line x1="1141.6" y1="904.17" x2="1147.6" y2="904.17" stroke="#8a8a8a" stroke-width="1.1" />
<line x1="1141.6" y1="911.26" x2="1147.6" y2="911.26" stroke="#8a8a8a" stroke-width="1.1" />
<line x1="1141.6" y1="915.02" x2="1147.6" y2="915.02" stroke="#8a8a8a" stroke-width="1.1" />
<line x1="1141.6" y1="918.78" x2="1147.6" y2="918.78" stroke="#8a8a8a" stroke-width="1.1" />
<line x1="1141.6" y1="922.54" x2="1147.6" y2="922.54" stroke="#8a8a8a" stroke-width="1.1" />
<rect x="1148.7" y="709.8" width="3.2" height="218.2" fill="#3a3a3a" rx="1.5"/>
<rect x="1135.5" y="739.5" width="29.4" height="56.8" fill="#3a3a3a" rx="2.5" opacity="0.6"/>
<rect x="1136.4" y="738.3" width="27.7" height="56.1" fill="#8c8e8e" rx="2"/>
<rect x="1136.4" y="738.3" width="27.7" height="8.3" fill="url(#fcTop)" rx="2"/>
<rect x="1136.4" y="746.6" width="27.7" height="19.2" fill="url(#fcMidT)"/>
<rect x="1136.4" y="766.8" width="27.7" height="19.6" fill="url(#fcMidB)"/>
<rect x="1136.4" y="786.4" width="27.7" height="8" fill="url(#fcBot)" rx="2"/>
<line x1="1136.4" y1="749.8" x2="1164.1" y2="749.8" stroke="#7c7e7e" stroke-width="0.8" />
<line x1="1136.4" y1="753.7" x2="1164.1" y2="753.7" stroke="#7c7e7e" stroke-width="0.8" />
<line x1="1136.4" y1="757.6" x2="1164.1" y2="757.6" stroke="#7c7e7e" stroke-width="0.8" />
<line x1="1136.4" y1="761.5" x2="1164.1" y2="761.5" stroke="#7c7e7e" stroke-width="0.8" />
<line x1="1136.4" y1="765.4" x2="1164.1" y2="765.4" stroke="#7c7e7e" stroke-width="0.8" />
<line x1="1136.4" y1="770.2" x2="1164.1" y2="770.2" stroke="#d4d8d8" stroke-width="0.9" />
<line x1="1136.4" y1="774.1" x2="1164.1" y2="774.1" stroke="#d4d8d8" stroke-width="0.9" />
<line x1="1136.4" y1="778" x2="1164.1" y2="778" stroke="#d4d8d8" stroke-width="0.9" />
<line x1="1136.4" y1="781.9" x2="1164.1" y2="781.9" stroke="#d4d8d8" stroke-width="0.9" />
<line x1="1136.4" y1="785.8" x2="1164.1" y2="785.8" stroke="#d4d8d8" stroke-width="0.9" />
<line x1="1136.4" y1="766.3" x2="1164.1" y2="766.3" stroke="#2c2c2c" stroke-width="1.3" />
<line x1="1129.6" y1="766.5" x2="1136.4" y2="766.5" stroke="#ffffff" stroke-width="1.8" />
</g>
<rect x="1196" y="706.7" width="18.4" height="221.6" fill="#383838" rx="2.5"/>
<text x="1187.97" y="714.9" font-size="10.3" fill="#b8b8b8" text-anchor="end" letter-spacing="0.27" stroke="#b8b8b8" stroke-width="0.2">0</text>
<line x1="1190.4" y1="711.2" x2="1195.1" y2="711.2" stroke="#b4b4b4" stroke-width="1.6" />
<rect x="1193.7" y="715.27" width="1.5" height="1.4" fill="#a8a8a8"/>
<rect x="1193.7" y="720.03" width="1.5" height="1.4" fill="#a8a8a8"/>
<text x="1187.97" y="729.2" font-size="10.3" fill="#b8b8b8" text-anchor="end" letter-spacing="0.27" stroke="#b8b8b8" stroke-width="0.2">3</text>
<line x1="1190.4" y1="725.5" x2="1195.1" y2="725.5" stroke="#b4b4b4" stroke-width="1.6" />
<rect x="1193.7" y="729.5" width="1.5" height="1.4" fill="#a8a8a8"/>
<rect x="1193.7" y="734.2" width="1.5" height="1.4" fill="#a8a8a8"/>
<text x="1187.97" y="743.3" font-size="10.3" fill="#b8b8b8" text-anchor="end" letter-spacing="0.27" stroke="#b8b8b8" stroke-width="0.2">6</text>
<line x1="1190.4" y1="739.6" x2="1195.1" y2="739.6" stroke="#b4b4b4" stroke-width="1.6" />
<rect x="1193.7" y="743.67" width="1.5" height="1.4" fill="#a8a8a8"/>
<rect x="1193.7" y="748.43" width="1.5" height="1.4" fill="#a8a8a8"/>
<text x="1187.97" y="757.6" font-size="10.3" fill="#b8b8b8" text-anchor="end" letter-spacing="0.27" stroke="#b8b8b8" stroke-width="0.2">9</text>
<line x1="1190.4" y1="753.9" x2="1195.1" y2="753.9" stroke="#b4b4b4" stroke-width="1.6" />
<rect x="1193.7" y="757.93" width="1.5" height="1.4" fill="#a8a8a8"/>
<rect x="1193.7" y="762.67" width="1.5" height="1.4" fill="#a8a8a8"/>
<text x="1187.82" y="771.8" font-size="10.3" fill="#b8b8b8" text-anchor="end" letter-spacing="0.12" stroke="#b8b8b8" stroke-width="0.2">12</text>
<line x1="1190.4" y1="768.1" x2="1195.1" y2="768.1" stroke="#b4b4b4" stroke-width="1.6" />
<rect x="1193.7" y="772.2" width="1.5" height="1.4" fill="#a8a8a8"/>
<rect x="1193.7" y="777" width="1.5" height="1.4" fill="#a8a8a8"/>
<text x="1187.82" y="786.2" font-size="10.3" fill="#b8b8b8" text-anchor="end" letter-spacing="0.12" stroke="#b8b8b8" stroke-width="0.2">15</text>
<line x1="1190.4" y1="782.5" x2="1195.1" y2="782.5" stroke="#b4b4b4" stroke-width="1.6" />
<rect x="1193.7" y="786.6" width="1.5" height="1.4" fill="#a8a8a8"/>
<rect x="1193.7" y="791.4" width="1.5" height="1.4" fill="#a8a8a8"/>
<text x="1187.82" y="800.6" font-size="10.3" fill="#b8b8b8" text-anchor="end" letter-spacing="0.12" stroke="#b8b8b8" stroke-width="0.2">18</text>
<line x1="1190.4" y1="796.9" x2="1195.1" y2="796.9" stroke="#b4b4b4" stroke-width="1.6" />
<rect x="1193.7" y="800.97" width="1.5" height="1.4" fill="#a8a8a8"/>
<rect x="1193.7" y="805.73" width="1.5" height="1.4" fill="#a8a8a8"/>
<text x="1187.82" y="814.9" font-size="10.3" fill="#b8b8b8" text-anchor="end" letter-spacing="0.12" stroke="#b8b8b8" stroke-width="0.2">21</text>
<line x1="1190.4" y1="811.2" x2="1195.1" y2="811.2" stroke="#b4b4b4" stroke-width="1.6" />
<rect x="1193.7" y="815.37" width="1.5" height="1.4" fill="#a8a8a8"/>
<rect x="1193.7" y="820.23" width="1.5" height="1.4" fill="#a8a8a8"/>
<text x="1187.82" y="829.5" font-size="10.3" fill="#b8b8b8" text-anchor="end" letter-spacing="0.12" stroke="#b8b8b8" stroke-width="0.2">24</text>
<line x1="1190.4" y1="825.8" x2="1195.1" y2="825.8" stroke="#b4b4b4" stroke-width="1.6" />
<rect x="1193.7" y="829.97" width="1.5" height="1.4" fill="#a8a8a8"/>
<rect x="1193.7" y="834.85" width="1.5" height="1.4" fill="#a8a8a8"/>
<rect x="1193.7" y="839.72" width="1.5" height="1.4" fill="#a8a8a8"/>
<text x="1187.82" y="849" font-size="10.3" fill="#b8b8b8" text-anchor="end" letter-spacing="0.12" stroke="#b8b8b8" stroke-width="0.2">30</text>
<line x1="1190.4" y1="845.3" x2="1195.1" y2="845.3" stroke="#b4b4b4" stroke-width="1.6" />
<rect x="1193.7" y="849.83" width="1.5" height="1.4" fill="#a8a8a8"/>
<rect x="1193.7" y="855.07" width="1.5" height="1.4" fill="#a8a8a8"/>
<text x="1187.82" y="864.7" font-size="10.3" fill="#b8b8b8" text-anchor="end" letter-spacing="0.12" stroke="#b8b8b8" stroke-width="0.2">35</text>
<line x1="1190.4" y1="861" x2="1195.1" y2="861" stroke="#b4b4b4" stroke-width="1.6" />
<rect x="1193.7" y="865.57" width="1.5" height="1.4" fill="#a8a8a8"/>
<rect x="1193.7" y="870.83" width="1.5" height="1.4" fill="#a8a8a8"/>
<text x="1187.82" y="880.5" font-size="10.3" fill="#b8b8b8" text-anchor="end" letter-spacing="0.12" stroke="#b8b8b8" stroke-width="0.2">40</text>
<line x1="1190.4" y1="876.8" x2="1195.1" y2="876.8" stroke="#b4b4b4" stroke-width="1.6" />
<rect x="1193.7" y="881.43" width="1.5" height="1.4" fill="#a8a8a8"/>
<rect x="1193.7" y="886.77" width="1.5" height="1.4" fill="#a8a8a8"/>
<text x="1187.82" y="896.5" font-size="10.3" fill="#b8b8b8" text-anchor="end" letter-spacing="0.12" stroke="#b8b8b8" stroke-width="0.2">45</text>
<line x1="1190.4" y1="892.8" x2="1195.1" y2="892.8" stroke="#b4b4b4" stroke-width="1.6" />
<rect x="1193.7" y="897.43" width="1.5" height="1.4" fill="#a8a8a8"/>
<rect x="1193.7" y="902.77" width="1.5" height="1.4" fill="#a8a8a8"/>
<text x="1187.82" y="912.5" font-size="10.3" fill="#b8b8b8" text-anchor="end" letter-spacing="0.12" stroke="#b8b8b8" stroke-width="0.2">50</text>
<line x1="1190.4" y1="908.8" x2="1195.1" y2="908.8" stroke="#b4b4b4" stroke-width="1.6" />
<rect x="1193.7" y="913.33" width="1.5" height="1.4" fill="#a8a8a8"/>
<rect x="1193.7" y="918.57" width="1.5" height="1.4" fill="#a8a8a8"/>
<text x="1187.82" y="928.2" font-size="10.3" fill="#b8b8b8" text-anchor="end" letter-spacing="0.12" stroke="#b8b8b8" stroke-width="0.2">60</text>
<line x1="1190.4" y1="924.5" x2="1195.1" y2="924.5" stroke="#b4b4b4" stroke-width="1.6" />
<rect x="1198.5" y="795.8" width="4.9" height="130" fill="#4cd864"/>
<rect x="1206.6" y="795.8" width="4.9" height="130" fill="#4cd864"/>
<rect x="1179" y="938" width="41.5" height="24.7" fill="#474747" rx="6"/>
<rect x="1179" y="937" width="41.5" height="24.5" fill="url(#btnG)" rx="6"/>
<line x1="1200.3" y1="937" x2="1200.3" y2="961.5" stroke="#4c4c4c" stroke-width="1.2" />
<text x="1189.5" y="955.5" font-size="17.5" fill="#a01c14" text-anchor="middle">R</text>
<text x="1210.5" y="955.5" font-size="17.5" fill="#ffffff" text-anchor="middle" stroke="#ffffff" stroke-width="0.25">I</text>
<rect x="1131.3" y="970" width="41.2" height="25.2" fill="#474747" rx="6"/>
<rect x="1131.3" y="969" width="41.2" height="25" fill="url(#btnG)" rx="6"/>
<text x="1152" y="988" font-size="17.5" fill="#ffffff" text-anchor="middle" stroke="#ffffff" stroke-width="0.25">M</text>
<rect x="1179" y="970" width="41.5" height="25.2" fill="#474747" rx="6"/>
<rect x="1179" y="969" width="41.5" height="25" fill="url(#btnG)" rx="6"/>
<text x="1199.7" y="988" font-size="17.5" fill="#ffffff" text-anchor="middle" stroke="#ffffff" stroke-width="0.25">S</text>
<rect x="1237.9" y="125" width="89.5" height="25.7" fill="#474747" rx="6"/>
<rect x="1237.9" y="124" width="89.5" height="25.5" fill="url(#btnG)" rx="6"/>
<text x="1282.47" y="143" font-size="17.5" fill="#262626" text-anchor="middle" letter-spacing="0.33" stroke="#262626" stroke-width="0.3">Réglage</text>
<rect x="1236.4" y="157.5" width="92.5" height="14" fill="#505050"/>
<rect x="1236.4" y="178.5" width="92.5" height="46" fill="#505050"/>
<rect x="1237.9" y="248" width="89.5" height="25.7" fill="#474747" rx="6"/>
<rect x="1237.9" y="247" width="89.5" height="25.5" fill="url(#btnG)" rx="6"/>
<circle cx="1278.84" cy="260" r="5.7" fill="none" stroke="#ffffff" stroke-width="1.6"/>
<circle cx="1286.36" cy="260" r="5.7" fill="none" stroke="#ffffff" stroke-width="1.6"/>
<rect x="1237.9" y="288" width="89.5" height="26.5" fill="#525252" rx="6"/>
<rect x="1237.9" y="406.5" width="89.5" height="28.5" fill="#474747"/>
<rect x="1237.9" y="446" width="89.5" height="25.7" fill="#474747" rx="6"/>
<rect x="1237.9" y="445" width="89.5" height="25.5" fill="url(#btnG)" rx="6"/>
<text x="1281.5" y="464" font-size="17.5" fill="#66de78" text-anchor="middle" letter-spacing="-0.21">Read</text>
<rect x="1258.9" y="488.5" width="48" height="34.5" fill="url(#icong)" rx="3" stroke="#262e3a" stroke-width="1"/>
<rect x="1264.23" y="504.42" width="2.02" height="2.66" fill="#4db2f8" rx="1.01"/>
<rect x="1267.44" y="501.72" width="2.02" height="8.07" fill="#4db2f8" rx="1.01"/>
<rect x="1270.65" y="502.64" width="2.02" height="6.21" fill="#4db2f8" rx="1.01"/>
<rect x="1273.86" y="498.65" width="2.02" height="14.2" fill="#4db2f8" rx="1.01"/>
<rect x="1277.08" y="501.72" width="2.02" height="8.07" fill="#4db2f8" rx="1.01"/>
<rect x="1280.29" y="498.53" width="2.02" height="14.44" fill="#4db2f8" rx="1.01"/>
<rect x="1283.5" y="493.81" width="2.02" height="23.88" fill="#4db2f8" rx="1.01"/>
<rect x="1286.71" y="498.65" width="2.02" height="14.2" fill="#4db2f8" rx="1.01"/>
<rect x="1289.92" y="501.84" width="2.02" height="7.83" fill="#4db2f8" rx="1.01"/>
<rect x="1293.13" y="499.58" width="2.02" height="12.34" fill="#4db2f8" rx="1.01"/>
<rect x="1296.34" y="501.72" width="2.02" height="8.07" fill="#4db2f8" rx="1.01"/>
<rect x="1299.55" y="504.42" width="2.02" height="2.66" fill="#4db2f8" rx="1.01"/>
<path d="M1270.19 593.51 A25.45 25.45 0 1 1 1296.41 593.51" fill="none" stroke="#3b3b3b" stroke-width="6.3"/>
<circle cx="1283.3" cy="572.9" r="22.2" fill="#4c4c4c"/>
<circle cx="1283.3" cy="571.7" r="22.2" fill="url(#panG)"/>
<line x1="1283.3" y1="543.1" x2="1283.3" y2="549.4" stroke="#3c8e4a" stroke-width="1.4" />
<line x1="1283.3" y1="552.3" x2="1283.3" y2="557.1" stroke="#141414" stroke-width="2" />
<rect x="1237.9" y="646" width="43.3" height="28.5" fill="#383838"/>
<rect x="1284.4" y="646" width="43" height="28.5" fill="#383838"/>
<text x="1259.38" y="667.3" font-size="17" fill="#ffffff" text-anchor="middle" letter-spacing="0.46">0,0</text>
<g transform="translate(0,-1.5)">
<line x1="1236.5" y1="711.8" x2="1254.5" y2="711.8" stroke="#a0a0a0" stroke-width="1.7" />
<line x1="1236.5" y1="739.2" x2="1254.5" y2="739.2" stroke="#a0a0a0" stroke-width="1.7" />
<line x1="1236.5" y1="766.5" x2="1254.5" y2="766.5" stroke="#a0a0a0" stroke-width="1.7" />
<line x1="1236.5" y1="793.8" x2="1254.5" y2="793.8" stroke="#a0a0a0" stroke-width="1.7" />
<line x1="1236.5" y1="821" x2="1254.5" y2="821" stroke="#a0a0a0" stroke-width="1.7" />
<line x1="1236.5" y1="838.5" x2="1254.5" y2="838.5" stroke="#a0a0a0" stroke-width="1.7" />
<line x1="1236.5" y1="861" x2="1254.5" y2="861" stroke="#a0a0a0" stroke-width="1.7" />
<line x1="1236.5" y1="878.5" x2="1254.5" y2="878.5" stroke="#a0a0a0" stroke-width="1.7" />
<line x1="1236.5" y1="897.5" x2="1254.5" y2="897.5" stroke="#a0a0a0" stroke-width="1.7" />
<line x1="1236.5" y1="907.5" x2="1254.5" y2="907.5" stroke="#a0a0a0" stroke-width="1.7" />
<line x1="1236.5" y1="926.3" x2="1254.5" y2="926.3" stroke="#a0a0a0" stroke-width="1.7" />
<line x1="1247.7" y1="720.3" x2="1254.5" y2="720.3" stroke="#909090" stroke-width="1.6" />
<line x1="1247.7" y1="729.6" x2="1254.5" y2="729.6" stroke="#909090" stroke-width="1.6" />
<line x1="1247.7" y1="748" x2="1254.5" y2="748" stroke="#909090" stroke-width="1.6" />
<line x1="1247.7" y1="757.2" x2="1254.5" y2="757.2" stroke="#909090" stroke-width="1.6" />
<line x1="1247.7" y1="775.5" x2="1254.5" y2="775.5" stroke="#909090" stroke-width="1.6" />
<line x1="1247.7" y1="784.7" x2="1254.5" y2="784.7" stroke="#909090" stroke-width="1.6" />
<line x1="1247.7" y1="803" x2="1254.5" y2="803" stroke="#909090" stroke-width="1.6" />
<line x1="1247.7" y1="812.2" x2="1254.5" y2="812.2" stroke="#909090" stroke-width="1.6" />
<line x1="1248.5" y1="825.38" x2="1254.5" y2="825.38" stroke="#8a8a8a" stroke-width="1.1" />
<line x1="1248.5" y1="829.75" x2="1254.5" y2="829.75" stroke="#8a8a8a" stroke-width="1.1" />
<line x1="1248.5" y1="834.12" x2="1254.5" y2="834.12" stroke="#8a8a8a" stroke-width="1.1" />
<line x1="1248.5" y1="843" x2="1254.5" y2="843" stroke="#8a8a8a" stroke-width="1.1" />
<line x1="1248.5" y1="847.5" x2="1254.5" y2="847.5" stroke="#8a8a8a" stroke-width="1.1" />
<line x1="1248.5" y1="852" x2="1254.5" y2="852" stroke="#8a8a8a" stroke-width="1.1" />
<line x1="1248.5" y1="856.5" x2="1254.5" y2="856.5" stroke="#8a8a8a" stroke-width="1.1" />
<line x1="1248.5" y1="864.5" x2="1254.5" y2="864.5" stroke="#8a8a8a" stroke-width="1.1" />
<line x1="1248.5" y1="868" x2="1254.5" y2="868" stroke="#8a8a8a" stroke-width="1.1" />
<line x1="1248.5" y1="871.5" x2="1254.5" y2="871.5" stroke="#8a8a8a" stroke-width="1.1" />
<line x1="1248.5" y1="875" x2="1254.5" y2="875" stroke="#8a8a8a" stroke-width="1.1" />
<line x1="1248.5" y1="882.3" x2="1254.5" y2="882.3" stroke="#8a8a8a" stroke-width="1.1" />
<line x1="1248.5" y1="886.1" x2="1254.5" y2="886.1" stroke="#8a8a8a" stroke-width="1.1" />
<line x1="1248.5" y1="889.9" x2="1254.5" y2="889.9" stroke="#8a8a8a" stroke-width="1.1" />
<line x1="1248.5" y1="893.7" x2="1254.5" y2="893.7" stroke="#8a8a8a" stroke-width="1.1" />
<line x1="1248.5" y1="900.83" x2="1254.5" y2="900.83" stroke="#8a8a8a" stroke-width="1.1" />
<line x1="1248.5" y1="904.17" x2="1254.5" y2="904.17" stroke="#8a8a8a" stroke-width="1.1" />
<line x1="1248.5" y1="911.26" x2="1254.5" y2="911.26" stroke="#8a8a8a" stroke-width="1.1" />
<line x1="1248.5" y1="915.02" x2="1254.5" y2="915.02" stroke="#8a8a8a" stroke-width="1.1" />
<line x1="1248.5" y1="918.78" x2="1254.5" y2="918.78" stroke="#8a8a8a" stroke-width="1.1" />
<line x1="1248.5" y1="922.54" x2="1254.5" y2="922.54" stroke="#8a8a8a" stroke-width="1.1" />
<rect x="1255.6" y="709.8" width="3.2" height="218.2" fill="#3a3a3a" rx="1.5"/>
<rect x="1242.4" y="739.5" width="29.4" height="56.8" fill="#3a3a3a" rx="2.5" opacity="0.6"/>
<rect x="1243.3" y="738.3" width="27.7" height="56.1" fill="#8c8e8e" rx="2"/>
<rect x="1243.3" y="738.3" width="27.7" height="8.3" fill="url(#fcTop)" rx="2"/>
<rect x="1243.3" y="746.6" width="27.7" height="19.2" fill="url(#fcMidT)"/>
<rect x="1243.3" y="766.8" width="27.7" height="19.6" fill="url(#fcMidB)"/>
<rect x="1243.3" y="786.4" width="27.7" height="8" fill="url(#fcBot)" rx="2"/>
<line x1="1243.3" y1="749.8" x2="1271" y2="749.8" stroke="#7c7e7e" stroke-width="0.8" />
<line x1="1243.3" y1="753.7" x2="1271" y2="753.7" stroke="#7c7e7e" stroke-width="0.8" />
<line x1="1243.3" y1="757.6" x2="1271" y2="757.6" stroke="#7c7e7e" stroke-width="0.8" />
<line x1="1243.3" y1="761.5" x2="1271" y2="761.5" stroke="#7c7e7e" stroke-width="0.8" />
<line x1="1243.3" y1="765.4" x2="1271" y2="765.4" stroke="#7c7e7e" stroke-width="0.8" />
<line x1="1243.3" y1="770.2" x2="1271" y2="770.2" stroke="#d4d8d8" stroke-width="0.9" />
<line x1="1243.3" y1="774.1" x2="1271" y2="774.1" stroke="#d4d8d8" stroke-width="0.9" />
<line x1="1243.3" y1="778" x2="1271" y2="778" stroke="#d4d8d8" stroke-width="0.9" />
<line x1="1243.3" y1="781.9" x2="1271" y2="781.9" stroke="#d4d8d8" stroke-width="0.9" />
<line x1="1243.3" y1="785.8" x2="1271" y2="785.8" stroke="#d4d8d8" stroke-width="0.9" />
<line x1="1243.3" y1="766.3" x2="1271" y2="766.3" stroke="#2c2c2c" stroke-width="1.3" />
<line x1="1236.5" y1="766.5" x2="1243.3" y2="766.5" stroke="#ffffff" stroke-width="1.8" />
</g>
<rect x="1302.9" y="706.7" width="18.4" height="221.6" fill="#383838" rx="2.5"/>
<text x="1294.87" y="714.9" font-size="10.3" fill="#b8b8b8" text-anchor="end" letter-spacing="0.27" stroke="#b8b8b8" stroke-width="0.2">0</text>
<line x1="1297.3" y1="711.2" x2="1302" y2="711.2" stroke="#b4b4b4" stroke-width="1.6" />
<rect x="1300.6" y="715.27" width="1.5" height="1.4" fill="#a8a8a8"/>
<rect x="1300.6" y="720.03" width="1.5" height="1.4" fill="#a8a8a8"/>
<text x="1294.87" y="729.2" font-size="10.3" fill="#b8b8b8" text-anchor="end" letter-spacing="0.27" stroke="#b8b8b8" stroke-width="0.2">3</text>
<line x1="1297.3" y1="725.5" x2="1302" y2="725.5" stroke="#b4b4b4" stroke-width="1.6" />
<rect x="1300.6" y="729.5" width="1.5" height="1.4" fill="#a8a8a8"/>
<rect x="1300.6" y="734.2" width="1.5" height="1.4" fill="#a8a8a8"/>
<text x="1294.87" y="743.3" font-size="10.3" fill="#b8b8b8" text-anchor="end" letter-spacing="0.27" stroke="#b8b8b8" stroke-width="0.2">6</text>
<line x1="1297.3" y1="739.6" x2="1302" y2="739.6" stroke="#b4b4b4" stroke-width="1.6" />
<rect x="1300.6" y="743.67" width="1.5" height="1.4" fill="#a8a8a8"/>
<rect x="1300.6" y="748.43" width="1.5" height="1.4" fill="#a8a8a8"/>
<text x="1294.87" y="757.6" font-size="10.3" fill="#b8b8b8" text-anchor="end" letter-spacing="0.27" stroke="#b8b8b8" stroke-width="0.2">9</text>
<line x1="1297.3" y1="753.9" x2="1302" y2="753.9" stroke="#b4b4b4" stroke-width="1.6" />
<rect x="1300.6" y="757.93" width="1.5" height="1.4" fill="#a8a8a8"/>
<rect x="1300.6" y="762.67" width="1.5" height="1.4" fill="#a8a8a8"/>
<text x="1294.72" y="771.8" font-size="10.3" fill="#b8b8b8" text-anchor="end" letter-spacing="0.12" stroke="#b8b8b8" stroke-width="0.2">12</text>
<line x1="1297.3" y1="768.1" x2="1302" y2="768.1" stroke="#b4b4b4" stroke-width="1.6" />
<rect x="1300.6" y="772.2" width="1.5" height="1.4" fill="#a8a8a8"/>
<rect x="1300.6" y="777" width="1.5" height="1.4" fill="#a8a8a8"/>
<text x="1294.72" y="786.2" font-size="10.3" fill="#b8b8b8" text-anchor="end" letter-spacing="0.12" stroke="#b8b8b8" stroke-width="0.2">15</text>
<line x1="1297.3" y1="782.5" x2="1302" y2="782.5" stroke="#b4b4b4" stroke-width="1.6" />
<rect x="1300.6" y="786.6" width="1.5" height="1.4" fill="#a8a8a8"/>
<rect x="1300.6" y="791.4" width="1.5" height="1.4" fill="#a8a8a8"/>
<text x="1294.72" y="800.6" font-size="10.3" fill="#b8b8b8" text-anchor="end" letter-spacing="0.12" stroke="#b8b8b8" stroke-width="0.2">18</text>
<line x1="1297.3" y1="796.9" x2="1302" y2="796.9" stroke="#b4b4b4" stroke-width="1.6" />
<rect x="1300.6" y="800.97" width="1.5" height="1.4" fill="#a8a8a8"/>
<rect x="1300.6" y="805.73" width="1.5" height="1.4" fill="#a8a8a8"/>
<text x="1294.72" y="814.9" font-size="10.3" fill="#b8b8b8" text-anchor="end" letter-spacing="0.12" stroke="#b8b8b8" stroke-width="0.2">21</text>
<line x1="1297.3" y1="811.2" x2="1302" y2="811.2" stroke="#b4b4b4" stroke-width="1.6" />
<rect x="1300.6" y="815.37" width="1.5" height="1.4" fill="#a8a8a8"/>
<rect x="1300.6" y="820.23" width="1.5" height="1.4" fill="#a8a8a8"/>
<text x="1294.72" y="829.5" font-size="10.3" fill="#b8b8b8" text-anchor="end" letter-spacing="0.12" stroke="#b8b8b8" stroke-width="0.2">24</text>
<line x1="1297.3" y1="825.8" x2="1302" y2="825.8" stroke="#b4b4b4" stroke-width="1.6" />
<rect x="1300.6" y="829.97" width="1.5" height="1.4" fill="#a8a8a8"/>
<rect x="1300.6" y="834.85" width="1.5" height="1.4" fill="#a8a8a8"/>
<rect x="1300.6" y="839.72" width="1.5" height="1.4" fill="#a8a8a8"/>
<text x="1294.72" y="849" font-size="10.3" fill="#b8b8b8" text-anchor="end" letter-spacing="0.12" stroke="#b8b8b8" stroke-width="0.2">30</text>
<line x1="1297.3" y1="845.3" x2="1302" y2="845.3" stroke="#b4b4b4" stroke-width="1.6" />
<rect x="1300.6" y="849.83" width="1.5" height="1.4" fill="#a8a8a8"/>
<rect x="1300.6" y="855.07" width="1.5" height="1.4" fill="#a8a8a8"/>
<text x="1294.72" y="864.7" font-size="10.3" fill="#b8b8b8" text-anchor="end" letter-spacing="0.12" stroke="#b8b8b8" stroke-width="0.2">35</text>
<line x1="1297.3" y1="861" x2="1302" y2="861" stroke="#b4b4b4" stroke-width="1.6" />
<rect x="1300.6" y="865.57" width="1.5" height="1.4" fill="#a8a8a8"/>
<rect x="1300.6" y="870.83" width="1.5" height="1.4" fill="#a8a8a8"/>
<text x="1294.72" y="880.5" font-size="10.3" fill="#b8b8b8" text-anchor="end" letter-spacing="0.12" stroke="#b8b8b8" stroke-width="0.2">40</text>
<line x1="1297.3" y1="876.8" x2="1302" y2="876.8" stroke="#b4b4b4" stroke-width="1.6" />
<rect x="1300.6" y="881.43" width="1.5" height="1.4" fill="#a8a8a8"/>
<rect x="1300.6" y="886.77" width="1.5" height="1.4" fill="#a8a8a8"/>
<text x="1294.72" y="896.5" font-size="10.3" fill="#b8b8b8" text-anchor="end" letter-spacing="0.12" stroke="#b8b8b8" stroke-width="0.2">45</text>
<line x1="1297.3" y1="892.8" x2="1302" y2="892.8" stroke="#b4b4b4" stroke-width="1.6" />
<rect x="1300.6" y="897.43" width="1.5" height="1.4" fill="#a8a8a8"/>
<rect x="1300.6" y="902.77" width="1.5" height="1.4" fill="#a8a8a8"/>
<text x="1294.72" y="912.5" font-size="10.3" fill="#b8b8b8" text-anchor="end" letter-spacing="0.12" stroke="#b8b8b8" stroke-width="0.2">50</text>
<line x1="1297.3" y1="908.8" x2="1302" y2="908.8" stroke="#b4b4b4" stroke-width="1.6" />
<rect x="1300.6" y="913.33" width="1.5" height="1.4" fill="#a8a8a8"/>
<rect x="1300.6" y="918.57" width="1.5" height="1.4" fill="#a8a8a8"/>
<text x="1294.72" y="928.2" font-size="10.3" fill="#b8b8b8" text-anchor="end" letter-spacing="0.12" stroke="#b8b8b8" stroke-width="0.2">60</text>
<line x1="1297.3" y1="924.5" x2="1302" y2="924.5" stroke="#b4b4b4" stroke-width="1.6" />
<rect x="1286" y="938" width="41.3" height="24.7" fill="#474747" rx="6"/>
<rect x="1286" y="937" width="41.3" height="24.5" fill="url(#btnG)" rx="6"/>
<text x="1306.84" y="955.5" font-size="17.5" fill="#ffffff" text-anchor="middle" letter-spacing="0.28" stroke="#ffffff" stroke-width="0.3">Bnc</text>
<rect x="1238" y="970" width="41" height="25.2" fill="#474747" rx="6"/>
<rect x="1238" y="969" width="41" height="25" fill="url(#btnG)" rx="6"/>
<text x="1258.5" y="988" font-size="17.5" fill="#ffffff" text-anchor="middle" stroke="#ffffff" stroke-width="0.25">M</text>
<rect x="1123.2" y="1003.2" width="105.7" height="38.8" fill="#3a6fae"/>
<rect x="1230" y="1003.2" width="106.6" height="38.8" fill="#3a6fae"/>
<rect x="1337.6" y="1003.2" width="7.4" height="38.8" fill="#3a6fae"/>
<line x1="964" y1="1047" x2="1345" y2="1047" stroke="#2e2e2e" stroke-width="1" />
<text x="1176.77" y="1027.2" font-size="17" fill="#f0f0f0" text-anchor="middle" letter-spacing="0.34">Audio 1</text>
<text x="1283.5" y="1027.2" font-size="17" fill="#f0f0f0" text-anchor="middle" letter-spacing="1">Output</text>
<rect x="1338.5" y="0" width="111.5" height="1056" fill="#ffffff"/>
</g>
<g id="captions">
<line x1="426.3" y1="1050" x2="426.3" y2="1094" stroke="#6a6a6a" stroke-width="2" />
<line x1="741.7" y1="1050" x2="741.7" y2="1095.5" stroke="#6a6a6a" stroke-width="2" />
<line x1="1177.3" y1="1050" x2="1177.3" y2="1098.5" stroke="#6a6a6a" stroke-width="2" />
<text x="420.52" y="1102.5" font-size="28.3" fill="#111111" text-anchor="end" letter-spacing="0.52" stroke="#111111" stroke-width="0.25">Objet de tranche de console</text>
<text x="420.46" y="1137.5" font-size="28.3" fill="#111111" text-anchor="end" letter-spacing="0.46" stroke="#111111" stroke-width="0.25">de couche de table de mixage</text>
<text x="747" y="1102.5" font-size="28.3" fill="#111111" letter-spacing="0.63" stroke="#111111" stroke-width="0.25">Objet de tranche de</text>
<text x="747" y="1137.5" font-size="28.3" fill="#111111" letter-spacing="0.92" stroke="#111111" stroke-width="0.25">console d'inspecteur</text>
<text x="1183" y="1102.5" font-size="28.3" fill="#111111" letter-spacing="0.49" stroke="#111111" stroke-width="0.25">Objet de tranche</text>
<text x="1183" y="1137.5" font-size="28.3" fill="#111111" letter-spacing="0.56" stroke="#111111" stroke-width="0.25">de console de table</text>
<text x="1183" y="1172.5" font-size="28.3" fill="#111111" letter-spacing="0.49" stroke="#111111" stroke-width="0.25">de mixage</text>
</g>
</svg></body></html>
